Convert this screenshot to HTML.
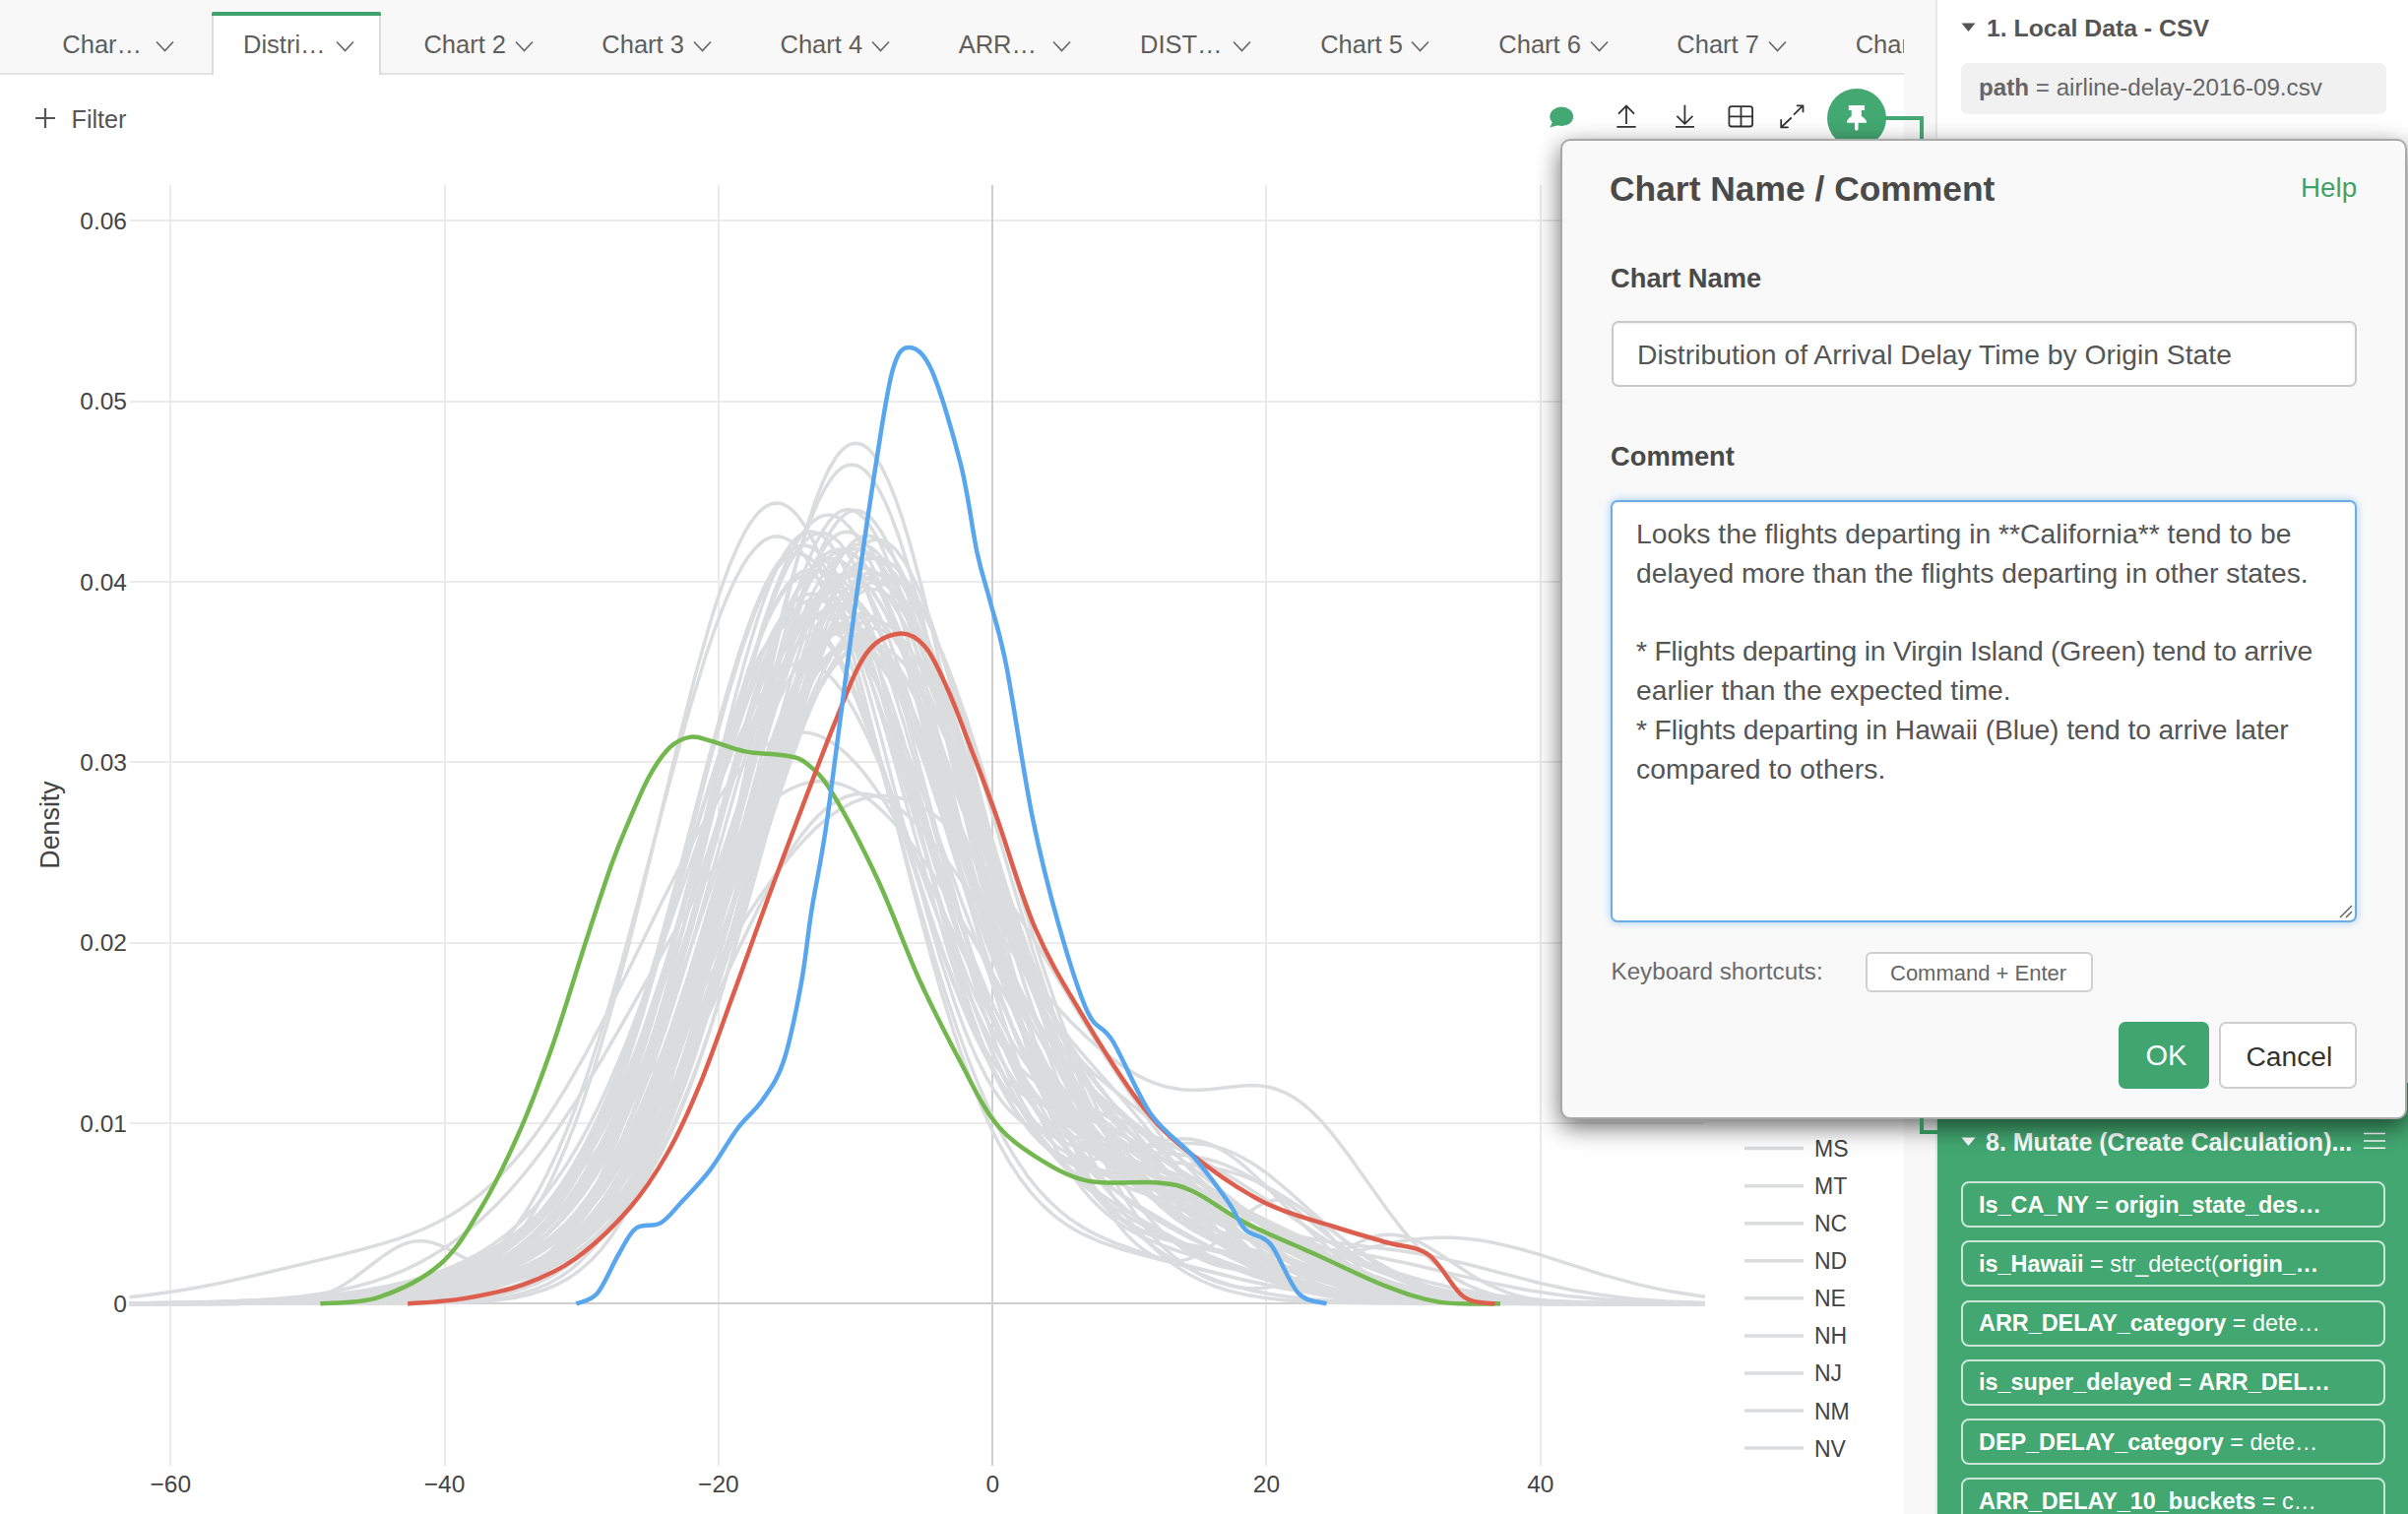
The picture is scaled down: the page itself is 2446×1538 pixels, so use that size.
<!DOCTYPE html>
<html>
<head>
<meta charset="utf-8">
<style>
html,body{margin:0;padding:0;}
body{width:2446px;height:1538px;overflow:hidden;position:relative;background:#fff;font-family:"Liberation Sans",sans-serif;color:#555;}
.abs{position:absolute;}
.t{position:absolute;white-space:nowrap;line-height:1;}
.chart{position:absolute;left:0;top:0;}
/* tab bar */
#tabbar{position:absolute;left:0;top:0;width:1934px;height:76px;background:#f8f8f8;border-bottom:0;}
#tabline{position:absolute;left:0;top:74px;width:1934px;height:2px;background:#e2e2e2;}
.tab{position:absolute;top:0;height:76px;}
.tabtxt{position:absolute;top:32.8px;font-size:25.5px;line-height:1;color:#5e5e5e;white-space:nowrap;}
.chev{position:absolute;top:41px;width:19px;height:12px;}
#activetab{position:absolute;left:215px;top:12px;width:172px;height:64px;background:#fff;border-left:2px solid #dcdcdc;border-right:2px solid #dcdcdc;box-sizing:border-box;}
#activetab:before{content:"";position:absolute;left:-2px;right:-2px;top:0;height:4px;background:#3ea36b;border-radius:2px 2px 0 0;}
#gapstrip{position:absolute;left:1934px;top:0;width:33px;height:1538px;background:#f8f8f8;}
#vline{position:absolute;left:1966px;top:0;width:2px;height:1538px;background:#e8e8e8;}
/* right panel */
#rpanel{position:absolute;left:1968px;top:0;width:478px;height:1538px;background:#fff;}
#green{position:absolute;left:1968px;top:1100px;width:478px;height:438px;background:#42a770;}
.pill{position:absolute;left:1992px;width:431px;height:47px;box-sizing:border-box;border:2px solid rgba(255,255,255,0.72);border-radius:8px;}
.pilltxt{position:absolute;left:2010px;font-size:23.4px;line-height:1;color:#fff;white-space:nowrap;}
.pilltxt b{font-weight:bold;}
/* popover */
#pop{position:absolute;left:1584.5px;top:140.7px;width:860.2px;height:996.3px;box-sizing:border-box;background:#f9f9f9;border:2px solid rgba(0,0,0,0.32);border-radius:10px;box-shadow:0 8px 25px rgba(0,0,0,0.58);}
.lbl{position:absolute;font-weight:bold;font-size:27.3px;line-height:1;color:#4a4a4a;white-space:nowrap;}
#inp{position:absolute;left:1636.5px;top:326px;width:757.5px;height:67px;box-sizing:border-box;background:#fff;border:2px solid #cacaca;border-radius:7px;box-shadow:inset 0 1px 2px rgba(0,0,0,0.08);}
#ta{position:absolute;left:1636px;top:508px;width:758px;height:428.5px;box-sizing:border-box;background:#fff;border:2px solid #6aaee8;border-radius:7px;box-shadow:0 0 8px rgba(102,175,233,0.6), inset 0 1px 2px rgba(0,0,0,0.08);}
.tatxt{position:absolute;left:1662px;font-size:28.3px;line-height:1;color:#555;white-space:nowrap;}
#btnok{position:absolute;left:2152px;top:1038px;width:92px;height:68px;box-sizing:border-box;background:#41a56f;border-radius:7px;}
#btncancel{position:absolute;left:2254px;top:1038px;width:140px;height:68px;box-sizing:border-box;background:#fff;border:2px solid #cfcfcf;border-radius:7px;}
#kbd{position:absolute;left:1894.5px;top:966.5px;width:231px;height:41px;box-sizing:border-box;background:#fff;border:2px solid #d0d0d0;border-radius:6px;}
</style>
</head>
<body>
<!-- tab bar -->
<div id="tabbar"></div>
<div id="tabline"></div>
<div id="activetab"></div>
<div class="tabtxt" style="left:63.3px;">Char…</div>
<div class="tabtxt" style="left:247.0px;">Distri…</div>
<div class="tabtxt" style="left:430.4px;">Chart 2</div>
<div class="tabtxt" style="left:611.3px;">Chart 3</div>
<div class="tabtxt" style="left:792.5px;">Chart 4</div>
<div class="tabtxt" style="left:973.7px;">ARR…</div>
<div class="tabtxt" style="left:1158.0px;">DIST…</div>
<div class="tabtxt" style="left:1341.2px;">Chart 5</div>
<div class="tabtxt" style="left:1522.3px;">Chart 6</div>
<div class="tabtxt" style="left:1703.3px;">Chart 7</div>
<div class="tabtxt" style="left:1884.7px;width:49.3px;overflow:hidden;">Chart 8</div>
<svg class="chev" style="left:157.5px" viewBox="0 0 19 12"><path d="M1 1.5L9.5 10.5L18 1.5" stroke="#666" stroke-width="1.6" fill="none"/></svg>
<svg class="chev" style="left:341.1px" viewBox="0 0 19 12"><path d="M1 1.5L9.5 10.5L18 1.5" stroke="#666" stroke-width="1.6" fill="none"/></svg>
<svg class="chev" style="left:522.8px" viewBox="0 0 19 12"><path d="M1 1.5L9.5 10.5L18 1.5" stroke="#666" stroke-width="1.6" fill="none"/></svg>
<svg class="chev" style="left:703.7px" viewBox="0 0 19 12"><path d="M1 1.5L9.5 10.5L18 1.5" stroke="#666" stroke-width="1.6" fill="none"/></svg>
<svg class="chev" style="left:884.9px" viewBox="0 0 19 12"><path d="M1 1.5L9.5 10.5L18 1.5" stroke="#666" stroke-width="1.6" fill="none"/></svg>
<svg class="chev" style="left:1068.5px" viewBox="0 0 19 12"><path d="M1 1.5L9.5 10.5L18 1.5" stroke="#666" stroke-width="1.6" fill="none"/></svg>
<svg class="chev" style="left:1252.2px" viewBox="0 0 19 12"><path d="M1 1.5L9.5 10.5L18 1.5" stroke="#666" stroke-width="1.6" fill="none"/></svg>
<svg class="chev" style="left:1433.1px" viewBox="0 0 19 12"><path d="M1 1.5L9.5 10.5L18 1.5" stroke="#666" stroke-width="1.6" fill="none"/></svg>
<svg class="chev" style="left:1614.5px" viewBox="0 0 19 12"><path d="M1 1.5L9.5 10.5L18 1.5" stroke="#666" stroke-width="1.6" fill="none"/></svg>
<svg class="chev" style="left:1795.8px" viewBox="0 0 19 12"><path d="M1 1.5L9.5 10.5L18 1.5" stroke="#666" stroke-width="1.6" fill="none"/></svg>
<div id="gapstrip"></div>
<div id="vline"></div>

<!-- filter -->
<svg class="abs" style="left:35px;top:109px" width="22" height="22" viewBox="0 0 22 22"><path d="M11 1V21M1 11H21" stroke="#555" stroke-width="2.2" fill="none"/></svg>
<div class="t" style="left:72.5px;top:108.5px;font-size:25.2px;color:#555;">Filter</div>

<svg class="chart" width="1940" height="1538" viewBox="0 0 1940 1538">
<g stroke="#ebebeb" stroke-width="2"><line x1="132" y1="1141" x2="1730" y2="1141"/><line x1="132" y1="958" x2="1730" y2="958"/><line x1="132" y1="774" x2="1730" y2="774"/><line x1="132" y1="591" x2="1730" y2="591"/><line x1="132" y1="408" x2="1730" y2="408"/><line x1="132" y1="224" x2="1730" y2="224"/><line x1="173" y1="188" x2="173" y2="1489"/><line x1="452" y1="188" x2="452" y2="1489"/><line x1="730" y1="188" x2="730" y2="1489"/><line x1="1286" y1="188" x2="1286" y2="1489"/><line x1="1565" y1="188" x2="1565" y2="1489"/></g>
<line x1="1008" y1="188" x2="1008" y2="1489" stroke="#cfcfcf" stroke-width="2"/>
<line x1="132" y1="1324" x2="1730" y2="1324" stroke="#cfcfcf" stroke-width="2"/>
<g fill="none" stroke="#dbdcde" stroke-width="3.5" stroke-linejoin="round">
<path d="M131.6,1324.3l119.3,-0.6l40.9,-0.9l33.8,-1.2l30.3,-1.7l28.5,-2.5l24.9,-3.0l23.1,-3.9l23.2,-5.1l19.5,-5.6l17.8,-6.5l17.8,-8.1l16.1,-9.3l14.2,-10.1l14.2,-12.3l12.5,-12.9l10.7,-13.0l8.9,-12.4l8.9,-13.9l8.9,-15.6l8.9,-17.4l8.9,-19.3l8.9,-21.3l8.9,-23.4l8.9,-25.5l8.9,-27.6l8.9,-29.6l10.7,-38.0l19.5,-75.7l33.9,-139.2l12.4,-49.8l12.5,-46.5l12.4,-41.7l7.2,-21.0l7.1,-18.7l7.1,-16.0l7.1,-13.2l7.1,-10.3l3.6,-3.9l3.6,-3.1l3.5,-2.4l3.6,-1.5l5.3,-0.7l5.4,1.1l3.5,1.8l3.6,2.6l5.3,5.4l7.1,9.9l5.4,9.4l7.1,15.1l7.1,17.7l7.1,20.2l12.5,40.2l12.5,45.2l42.7,169.7l17.8,67.1l8.9,31.0l8.9,29.0l8.9,26.7l7.1,19.6l7.1,18.1l7.1,16.4l7.2,14.9l8.9,16.5l7.1,11.5l8.9,12.4l8.9,10.5l8.9,8.6l7.1,5.8l8.9,6.0l8.9,4.8l8.9,3.8l8.9,3.2l8.9,2.5l33.8,8.2l16.0,4.4l16.1,5.6l16.0,6.8l14.2,7.1l16.0,9.2l16.1,10.0l48.0,31.2l14.3,8.6l14.2,7.9l17.8,8.8l16.0,6.7l16.0,5.6l17.8,5.0l21.4,4.4l21.4,3.1l24.9,2.3l28.5,1.5l30.2,0.8l39.2,0.4l183.3,0.2"/>
<path d="M131.6,1324.2l99.7,-1.1l37.4,-1.1l33.8,-1.6l30.2,-2.2l26.7,-2.7l25.0,-3.4l23.1,-4.1l21.4,-4.9l19.5,-5.7l17.8,-6.5l16.1,-7.2l16.0,-8.8l14.2,-9.5l14.3,-11.4l12.4,-11.8l12.5,-13.7l10.7,-13.6l10.6,-15.4l10.7,-17.3l10.7,-19.4l10.7,-21.6l8.9,-19.7l10.7,-25.7l8.9,-23.1l8.9,-24.6l17.8,-53.1l17.8,-57.2l35.6,-118.6l16.0,-50.5l14.2,-40.8l7.1,-18.5l7.2,-16.8l7.1,-15.1l7.1,-13.2l7.1,-11.1l5.4,-6.9l7.1,-7.3l5.3,-3.9l3.6,-1.8l3.5,-1.3l5.4,-0.7l5.3,0.6l5.4,1.9l5.3,3.3l7.1,6.5l5.4,6.3l7.1,10.2l5.3,9.1l7.1,13.8l12.5,28.2l14.2,37.6l16.1,47.1l33.8,105.4l16.0,48.2l16.0,44.5l16.0,39.7l8.9,19.6l8.9,17.9l8.9,16.1l10.7,17.0l8.9,12.3l10.7,12.6l8.9,8.9l10.7,8.9l7.1,5.0l8.9,5.3l8.9,4.4l10.7,4.3l17.8,5.6l37.4,9.5l17.8,5.1l17.8,6.2l17.8,7.5l17.8,8.8l17.8,9.8l17.8,10.7l53.4,33.4l16.0,9.3l16.0,8.6l17.8,8.6l17.8,7.4l17.8,6.4l17.8,5.2l23.1,5.3l23.2,3.8l26.7,3.0l28.5,1.9l32.0,1.3l39.2,0.6l145.9,0.4"/>
<path d="M131.6,1324.4l137.1,-0.5l44.5,-0.6l35.6,-1.1l33.8,-1.6l28.5,-2.2l26.7,-3.0l23.1,-3.5l23.1,-4.7l21.4,-5.7l19.6,-6.7l17.8,-7.8l16.0,-8.8l16.0,-10.9l14.3,-12.0l12.4,-12.6l10.7,-12.7l8.9,-12.1l10.7,-16.5l8.9,-15.6l8.9,-17.4l8.9,-19.4l8.9,-21.4l8.9,-23.6l8.9,-25.7l10.7,-33.7l8.9,-30.4l10.6,-39.0l19.6,-77.7l33.8,-143.1l14.3,-58.3l12.4,-47.4l12.5,-42.1l7.1,-21.2l7.1,-18.7l7.2,-15.9l5.3,-10.0l7.1,-10.7l3.6,-4.2l3.5,-3.3l3.6,-2.5l3.6,-1.7l5.3,-0.9l5.3,1.0l3.6,1.7l3.6,2.5l5.3,5.4l7.1,9.9l5.4,9.5l7.1,15.1l7.1,17.9l7.1,20.4l10.7,34.4l12.5,45.0l12.4,48.5l32.1,128.7l17.8,66.8l8.9,30.7l8.9,28.6l8.9,26.4l8.9,23.9l7.1,17.4l8.9,19.7l8.9,17.5l8.9,15.3l8.9,13.5l10.7,14.1l10.6,12.0l10.7,10.6l17.8,15.3l51.6,40.0l57.0,46.7l14.2,11.0l12.5,9.0l19.6,12.4l17.8,9.5l17.8,7.5l19.6,6.3l19.5,4.6l21.4,3.3l24.9,2.3l28.5,1.4l32.0,0.7l42.8,0.3l226.0,0.1"/>
<path d="M131.6,1324.4l131.7,-0.6l42.7,-0.7l37.4,-1.1l33.8,-1.6l30.3,-2.3l26.7,-2.8l24.9,-3.6l24.9,-4.8l21.4,-5.4l19.6,-6.3l17.8,-7.2l16.0,-8.1l16.0,-9.9l14.3,-10.7l14.2,-12.9l10.7,-11.4l10.7,-13.0l10.6,-14.9l8.9,-13.9l10.7,-18.8l8.9,-17.4l8.9,-19.1l8.9,-20.8l8.9,-22.6l10.7,-29.5l10.7,-31.9l10.7,-34.2l21.3,-74.1l33.8,-124.6l14.3,-51.0l14.2,-47.5l12.5,-37.1l8.9,-23.3l7.1,-16.4l7.1,-14.2l7.1,-11.9l7.2,-9.3l7.1,-6.8l3.5,-2.4l3.6,-1.7l3.6,-1.0l3.5,-0.4l5.4,0.8l3.5,1.3l3.6,2.0l5.3,4.2l7.1,7.9l5.4,7.4l7.1,12.1l7.1,14.1l7.1,16.1l10.7,27.4l12.5,35.7l12.4,38.6l35.6,114.0l10.7,32.4l10.7,30.6l12.5,33.0l10.6,25.8l12.5,27.1l12.5,24.1l12.4,21.5l14.3,22.0l16.0,22.3l19.6,25.4l56.9,71.5l23.2,28.0l12.4,14.3l10.7,11.4l10.7,10.7l10.7,9.8l14.2,11.5l12.5,8.6l12.4,7.4l14.3,6.9l14.2,5.4l16.0,4.7l16.0,3.3l19.6,2.9l17.8,1.7l19.6,1.2l53.4,1.5l81.9,0.5l183.3,0.1"/>
<path d="M131.6,1324.4l135.3,-0.5l42.7,-0.6l35.6,-1.1l33.8,-1.6l28.5,-2.2l26.7,-2.9l23.1,-3.4l23.2,-4.6l21.3,-5.6l19.6,-6.6l17.8,-7.6l16.0,-8.6l16.1,-10.6l14.2,-11.7l12.5,-12.2l10.6,-12.3l10.7,-14.2l10.7,-16.4l8.9,-15.4l8.9,-17.2l8.9,-19.1l8.9,-21.1l8.9,-23.0l8.9,-25.2l10.7,-32.9l8.9,-29.6l10.7,-37.9l19.5,-75.2l33.9,-137.8l12.4,-49.1l12.5,-45.9l12.4,-41.1l7.2,-20.7l7.1,-18.5l7.1,-15.9l7.1,-13.2l7.1,-10.2l3.6,-4.1l3.6,-3.2l3.5,-2.5l3.6,-1.6l5.3,-1.1l5.4,0.8l3.5,1.5l3.6,2.3l5.3,4.8l7.1,9.1l5.4,8.7l7.1,14.0l7.1,16.6l7.1,18.8l12.5,37.8l12.5,42.5l12.4,45.8l33.8,128.4l19.6,69.3l10.7,34.6l8.9,26.8l8.9,24.8l8.9,22.7l8.9,20.6l8.9,18.6l8.9,16.7l8.9,14.8l8.9,13.2l10.7,13.9l10.7,12.0l10.6,10.4l10.7,9.1l10.7,8.0l12.5,8.4l12.4,7.6l35.6,19.7l74.8,39.0l32.0,15.5l28.5,12.1l28.5,10.1l26.7,7.6l24.9,5.4l26.7,4.3l28.5,3.2l32.0,2.2l33.8,1.3l42.8,0.8l154.8,0.4"/>
<path d="M131.6,1324.3l117.5,-0.8l40.9,-0.8l35.6,-1.3l32.1,-1.8l30.2,-2.4l26.7,-3.0l23.2,-3.4l23.1,-4.5l21.4,-5.2l19.5,-6.2l17.8,-7.0l16.1,-7.8l16.0,-9.5l14.2,-10.2l14.3,-12.2l10.6,-10.7l10.7,-12.2l10.7,-13.8l8.9,-12.9l10.7,-17.2l8.9,-15.9l8.9,-17.3l8.9,-18.8l8.9,-20.4l10.7,-26.4l10.6,-28.4l10.7,-30.4l21.4,-65.4l35.6,-115.8l14.2,-44.9l14.3,-42.0l14.2,-37.3l8.9,-20.4l7.1,-14.3l7.1,-12.4l7.2,-10.5l7.1,-8.2l7.1,-6.1l3.6,-2.2l3.5,-1.5l3.6,-1.0l3.5,-0.4l5.4,0.5l3.5,1.1l3.6,1.6l5.3,3.6l7.2,6.8l5.3,6.5l7.1,10.6l7.1,12.5l7.2,14.5l12.4,29.3l14.3,38.6l16.0,48.1l32.0,101.6l14.3,43.8l16.0,45.9l14.2,36.7l8.9,20.7l8.9,18.7l8.9,16.7l7.1,11.9l7.2,10.6l8.9,11.5l8.9,9.5l8.9,7.7l8.9,5.9l8.9,4.4l8.9,3.0l8.9,1.8l8.9,0.8l10.6,-0.1l10.7,-0.9l30.3,-3.4l10.7,-0.5l8.9,0.1l10.6,1.0l10.7,2.0l10.7,3.2l8.9,3.6l8.9,4.5l8.9,5.1l8.9,5.9l10.7,7.9l19.6,16.3l35.6,31.9l16.0,13.9l16.0,12.8l14.2,10.2l16.1,10.1l17.8,9.2l16.0,6.6l17.8,5.8l17.8,4.2l19.6,3.2l21.3,2.3l23.2,1.5l26.7,0.9l32.0,0.5l131.7,0.3"/>
<path d="M131.6,1324.2l106.8,-1.0l37.4,-1.0l33.8,-1.6l30.3,-2.1l28.4,-2.9l25.0,-3.4l23.1,-4.3l21.4,-5.1l19.5,-6.0l17.8,-6.9l17.8,-8.5l16.1,-9.6l14.2,-10.3l14.2,-12.6l12.5,-13.0l12.5,-15.3l10.6,-15.1l10.7,-17.3l10.7,-19.5l10.7,-21.9l10.7,-24.5l8.9,-22.5l10.6,-29.3l16.1,-48.9l17.8,-60.4l17.8,-65.3l33.8,-128.9l16.0,-58.0l14.2,-46.7l7.2,-21.1l7.1,-19.2l7.1,-17.2l5.3,-11.4l7.2,-13.1l5.3,-8.2l7.1,-8.6l5.4,-4.6l3.5,-2.3l3.6,-1.5l5.3,-1.0l5.4,0.6l3.5,1.3l3.6,2.0l3.5,2.7l3.6,3.3l7.1,8.7l7.1,11.3l7.2,13.7l7.1,15.9l7.1,17.9l12.5,35.6l14.2,46.0l12.5,43.2l35.6,127.6l21.3,71.6l10.7,32.9l10.7,30.5l10.7,28.0l10.6,25.5l10.7,22.9l10.7,20.5l10.7,18.2l10.7,16.2l10.6,14.3l12.5,14.6l12.5,12.8l14.2,12.7l10.7,8.5l10.7,7.9l12.4,8.4l14.3,8.9l16.0,9.3l16.0,8.7l33.8,16.8l30.3,13.1l28.5,10.4l28.4,8.4l14.3,3.4l16.0,3.4l24.9,4.1l28.5,3.3l30.3,2.2l33.8,1.5l37.4,0.8l46.2,0.5l197.6,0.2"/>
<path d="M131.6,1324.3l122.8,-0.7l42.7,-0.8l37.4,-1.2l33.8,-1.8l30.3,-2.4l26.7,-2.9l24.9,-3.6l24.9,-4.8l21.4,-5.3l19.6,-6.3l17.8,-7.0l16.0,-7.9l16.0,-9.6l14.3,-10.3l14.2,-12.3l12.5,-12.7l12.4,-14.8l12.5,-17.1l10.7,-16.7l10.6,-18.7l10.7,-20.8l10.7,-23.1l10.7,-25.2l8.9,-22.7l8.9,-24.2l19.6,-57.9l17.8,-57.0l37.3,-124.2l16.1,-50.4l8.9,-26.0l7.1,-19.5l7.1,-18.0l7.1,-16.4l7.1,-14.7l7.2,-12.7l7.1,-10.7l5.3,-6.6l7.1,-6.8l5.4,-3.6l3.5,-1.7l3.6,-1.1l5.3,-0.5l5.4,0.8l3.5,1.3l3.6,1.9l5.3,3.8l7.2,7.2l5.3,6.7l7.1,10.8l7.1,12.8l7.2,14.5l12.4,29.0l12.5,32.8l12.4,35.3l37.4,109.8l10.7,29.5l10.7,27.8l12.4,29.7l10.7,22.9l10.7,20.3l12.5,20.7l7.1,10.5l8.9,11.7l8.9,10.4l8.9,9.2l8.9,8.4l10.7,9.3l44.5,35.8l19.5,17.7l12.5,12.3l12.5,13.1l40.9,45.3l16.0,17.1l16.0,15.8l16.1,14.0l12.4,9.6l12.5,8.4l12.4,7.1l14.3,6.7l14.2,5.4l14.3,4.1l16.0,3.5l17.8,2.7l16.0,1.6l17.8,1.3l48.1,1.5l71.2,0.5l163.7,0.2"/>
<path d="M131.6,1324.4l140.6,-0.5l44.5,-0.6l35.6,-1.0l33.8,-1.7l28.5,-2.1l26.7,-2.9l24.9,-3.7l25.0,-5.1l21.3,-5.7l19.6,-6.9l17.8,-7.8l16.0,-8.9l16.0,-11.0l14.3,-12.1l12.4,-12.7l10.7,-12.7l10.7,-14.7l10.7,-16.9l8.9,-15.9l8.9,-17.8l8.9,-19.7l8.9,-21.7l8.9,-23.8l8.9,-26.0l10.7,-34.0l8.9,-30.5l10.6,-39.1l17.8,-70.3l35.6,-149.3l12.5,-50.5l12.5,-47.2l12.4,-42.1l7.1,-21.2l7.2,-18.8l7.1,-16.2l7.1,-13.2l7.1,-10.2l5.4,-5.6l3.5,-2.7l3.6,-1.9l5.3,-1.2l5.4,0.6l3.5,1.5l3.6,2.3l3.5,3.1l3.6,4.0l7.1,10.2l5.4,9.7l7.1,15.5l7.1,18.3l7.1,20.7l12.5,41.4l12.4,46.6l12.5,50.2l33.8,140.9l17.8,69.7l8.9,32.2l8.9,30.2l8.9,27.8l8.9,25.5l7.1,18.6l8.9,21.0l7.2,15.1l8.9,16.7l7.1,11.7l8.9,12.8l8.9,10.8l8.9,9.0l7.1,6.1l8.9,6.4l8.9,5.2l8.9,4.2l8.9,3.5l10.7,3.5l49.8,13.5l23.2,8.1l14.2,6.1l16.0,7.6l58.8,31.4l26.7,13.0l14.2,5.9l14.2,5.2l14.3,4.5l16.0,4.1l19.6,3.8l21.3,3.0l23.2,2.0l26.7,1.4l65.8,1.2l162.0,0.1"/>
<path d="M131.6,1324.2l110.4,-1.0l40.9,-1.1l35.6,-1.4l33.8,-2.1l30.3,-2.6l26.7,-3.2l24.9,-3.9l23.1,-4.6l21.4,-5.5l19.6,-6.3l17.8,-7.1l17.8,-8.7l16.0,-9.6l14.2,-10.2l14.3,-12.1l12.4,-12.3l12.5,-14.2l12.5,-16.2l10.6,-15.7l12.5,-20.4l10.7,-19.5l10.7,-21.4l10.6,-23.2l17.8,-42.8l19.6,-52.2l19.6,-56.4l39.2,-117.2l17.8,-50.3l16.0,-41.0l7.1,-16.4l7.1,-15.1l7.1,-13.7l7.2,-12.1l7.1,-10.4l7.1,-8.7l7.1,-6.9l7.1,-4.9l7.2,-3.1l7.1,-1.1l7.1,0.9l7.1,2.8l7.1,4.7l7.2,6.5l7.1,8.3l8.9,12.7l7.1,11.8l8.9,16.8l14.2,30.7l14.3,34.3l14.2,36.9l39.2,104.3l12.4,31.7l10.7,25.9l12.5,28.4l10.7,22.7l10.6,21.1l12.5,22.5l10.7,17.6l12.4,18.6l12.5,16.7l12.5,15.0l12.4,13.6l14.3,14.0l16.0,14.3l16.0,13.1l26.7,19.9l30.3,20.6l30.2,18.8l26.7,15.1l24.9,12.3l25.0,10.5l24.9,8.7l24.9,6.8l24.9,5.2l24.9,3.7l28.5,3.0l30.3,1.9l33.8,1.2l40.9,0.7l144.2,0.5"/>
<path d="M131.6,1324.2l110.4,-1.0l40.9,-0.9l35.6,-1.4l32.0,-1.9l30.3,-2.6l26.7,-3.1l24.9,-3.8l23.2,-4.6l21.3,-5.4l19.6,-6.2l17.8,-7.1l16.0,-7.8l16.0,-9.4l14.3,-10.0l14.2,-12.0l12.5,-12.2l12.4,-14.1l12.5,-16.2l10.7,-15.7l12.4,-20.6l10.7,-19.7l10.7,-21.6l10.7,-23.6l17.8,-43.5l19.6,-53.2l17.8,-52.2l39.1,-119.2l16.0,-46.2l16.1,-41.9l7.1,-16.8l7.1,-15.4l7.1,-13.9l7.1,-12.2l7.2,-10.5l7.1,-8.6l7.1,-6.6l7.1,-4.6l7.1,-2.5l5.4,-0.5l5.3,0.7l7.1,2.8l7.2,4.9l7.1,6.8l5.3,6.5l7.1,10.2l7.2,12.0l7.1,13.7l7.1,15.2l7.1,16.5l14.3,36.6l16.0,45.0l32.0,94.8l16.0,45.9l16.1,42.7l14.2,34.3l8.9,19.4l8.9,17.6l8.9,15.9l7.1,11.5l8.9,12.6l8.9,11.0l8.9,9.2l8.9,7.7l8.9,6.2l8.9,4.9l8.9,3.7l8.9,2.8l8.9,1.9l8.9,1.4l37.4,3.2l17.8,2.5l10.7,2.4l8.9,2.7l8.9,3.2l8.9,3.9l8.9,4.5l8.9,5.1l17.8,11.8l17.8,13.4l48.0,38.2l16.1,11.6l14.2,9.4l16.0,9.3l16.0,7.8l16.1,6.5l16.0,5.1l17.8,4.4l19.6,3.4l23.1,2.6l24.9,1.7l26.7,0.9l35.6,0.6l133.5,0.3"/>
<path d="M131.6,1324.4l137.1,-0.5l44.5,-0.6l37.3,-1.0l33.9,-1.6l30.2,-2.1l28.5,-2.8l24.9,-3.4l24.9,-4.5l21.4,-5.2l19.6,-5.9l19.6,-7.7l16.0,-7.7l16.0,-9.6l14.2,-10.4l14.3,-12.5l10.7,-11.1l10.6,-12.6l10.7,-14.5l8.9,-13.5l10.7,-18.3l8.9,-16.9l8.9,-18.6l8.9,-20.3l8.9,-22.1l10.7,-28.7l10.7,-31.2l10.6,-33.4l21.4,-72.5l35.6,-128.6l14.2,-49.9l14.3,-46.2l12.4,-36.0l8.9,-22.6l7.2,-15.7l7.1,-13.7l7.1,-11.2l7.1,-8.8l7.1,-6.3l3.6,-2.1l3.6,-1.5l5.3,-1.0l5.3,0.5l3.6,1.2l3.6,1.8l5.3,3.9l7.1,7.5l7.1,9.9l7.2,12.2l7.1,14.2l7.1,16.2l12.5,32.4l12.4,36.3l12.5,39.1l33.8,109.7l19.6,59.4l10.7,29.7l8.9,23.0l8.9,21.3l8.9,19.5l8.9,17.8l8.9,16.1l8.9,14.4l8.9,13.0l8.9,11.6l10.6,12.4l10.7,11.0l12.5,11.4l19.6,16.1l56.9,43.4l60.5,48.6l14.3,10.9l14.2,10.2l19.6,12.7l19.6,11.0l19.6,9.1l19.5,7.2l21.4,5.9l23.1,4.6l25.0,3.2l30.2,2.3l30.3,1.2l40.9,0.6l169.1,0.3"/>
<path d="M131.6,1324.2l110.4,-0.9l40.9,-1.0l35.6,-1.4l32.0,-1.9l30.3,-2.5l26.7,-3.1l24.9,-3.9l23.2,-4.7l21.3,-5.5l19.6,-6.3l17.8,-7.2l16.0,-8.0l16.0,-9.6l14.3,-10.4l14.2,-12.3l12.5,-12.6l12.4,-14.6l12.5,-16.8l10.7,-16.3l10.7,-18.2l10.6,-20.1l10.7,-22.2l10.7,-24.3l17.8,-44.8l19.6,-55.2l17.8,-54.3l39.1,-124.3l17.8,-53.3l14.3,-38.8l7.1,-17.5l7.1,-16.1l7.1,-14.5l7.2,-12.7l7.1,-10.9l7.1,-9.0l7.1,-6.8l7.1,-4.8l3.6,-1.5l3.6,-1.0l5.3,-0.5l5.3,0.8l3.6,1.1l3.6,1.8l7.1,5.0l7.1,7.1l5.3,6.7l7.2,10.5l7.1,12.3l7.1,13.9l12.5,27.8l14.2,36.0l12.5,34.0l37.3,105.4l12.5,33.1l10.7,26.7l12.4,28.6l12.5,25.8l10.7,19.6l12.4,20.3l8.9,12.7l8.9,11.6l10.7,12.4l10.7,11.2l16.0,15.1l35.6,31.3l19.6,18.1l21.4,21.1l39.1,41.0l16.0,16.2l16.1,15.1l16.0,13.7l14.2,10.6l12.5,8.1l14.2,7.9l14.3,6.4l14.2,5.2l16.0,4.5l16.0,3.3l17.8,2.6l17.8,1.8l19.6,1.3l49.9,1.5l78.3,0.6l165.5,0.1"/>
<path d="M131.6,1324.3l119.3,-0.8l42.7,-0.8l35.6,-1.3l33.8,-1.7l30.3,-2.4l26.7,-2.8l24.9,-3.5l24.9,-4.6l21.4,-5.1l19.5,-5.9l17.8,-6.7l17.8,-8.3l16.1,-9.1l14.2,-9.8l14.2,-11.6l12.5,-11.9l12.5,-13.8l12.4,-15.9l10.7,-15.5l12.5,-20.3l10.6,-19.5l10.7,-21.5l10.7,-23.4l17.8,-43.4l19.6,-53.4l17.8,-52.5l39.1,-120.2l17.8,-51.8l16.1,-41.8l7.1,-16.7l7.1,-15.3l7.1,-13.7l7.1,-12.0l7.2,-10.2l5.3,-6.4l7.1,-6.7l7.1,-4.8l7.2,-2.6l5.3,-0.6l5.3,0.5l7.2,2.6l5.3,3.3l7.1,6.2l5.4,5.8l7.1,9.5l5.3,8.2l7.1,12.4l12.5,25.3l14.2,33.4l16.1,41.6l35.6,98.1l16.0,42.5l16.0,39.4l16.0,35.4l10.7,21.1l8.9,15.9l8.9,14.5l10.7,15.5l8.9,11.4l10.7,12.1l10.6,10.5l10.7,9.1l14.3,10.3l16.0,9.9l14.2,7.7l44.5,22.9l30.3,17.4l26.7,17.1l58.7,39.7l28.5,17.6l17.8,9.7l16.0,7.8l16.0,6.7l17.8,6.4l23.2,6.5l23.1,4.8l24.9,3.7l28.5,2.6l30.3,1.6l37.4,1.0l128.1,0.7"/>
<path d="M131.6,1324.2l106.8,-1.0l39.2,-1.0l35.6,-1.5l30.2,-2.0l28.5,-2.6l26.7,-3.3l23.1,-3.9l23.2,-5.0l19.6,-5.4l17.8,-6.1l17.8,-7.6l16.0,-8.4l16.0,-10.3l14.2,-11.0l12.5,-11.4l12.5,-13.4l10.6,-13.1l10.7,-14.8l10.7,-16.8l10.7,-18.7l10.7,-20.8l10.6,-23.1l10.7,-25.2l8.9,-22.7l8.9,-24.1l19.6,-57.7l17.8,-56.8l37.4,-123.6l16.0,-49.9l14.2,-40.4l7.2,-18.1l7.1,-16.7l7.1,-14.9l7.1,-13.0l7.1,-11.1l5.4,-6.8l7.1,-7.2l5.3,-3.9l3.6,-1.9l3.6,-1.3l5.3,-0.8l5.3,0.5l5.4,1.9l5.3,3.1l7.1,6.2l5.4,6.2l7.1,10.0l5.3,8.8l7.2,13.4l12.4,27.6l14.3,36.8l16.0,46.1l32.0,97.7l16.0,47.1l16.1,43.4l14.2,34.4l8.9,19.3l8.9,17.5l8.9,15.7l8.9,13.9l8.9,12.2l10.7,12.5l8.9,8.9l10.7,9.1l8.9,6.4l10.6,6.6l12.5,6.8l28.5,14.1l14.2,7.5l14.3,8.4l14.2,9.5l14.2,10.6l14.3,11.6l48.0,42.3l16.1,13.6l16.0,12.6l14.2,10.0l16.0,9.9l14.3,7.5l14.2,6.3l16.0,5.7l19.6,5.3l23.2,4.3l24.9,2.8l28.5,1.8l30.2,0.9l42.7,0.5l197.6,0.2"/>
<path d="M131.6,1324.3l106.8,-1.0l39.2,-1.0l33.8,-1.5l30.2,-2.1l28.5,-2.8l24.9,-3.5l23.2,-4.2l21.3,-5.1l19.6,-5.9l17.8,-6.8l17.8,-8.4l16.0,-9.5l14.3,-10.3l14.2,-12.4l12.5,-13.0l12.4,-15.2l10.7,-15.0l10.7,-17.2l10.7,-19.5l10.7,-21.9l10.6,-24.4l8.9,-22.4l10.7,-29.4l16.0,-48.9l17.8,-60.5l17.8,-65.5l35.6,-136.1l16.1,-57.8l14.2,-46.3l12.5,-35.0l7.1,-17.2l5.3,-11.5l7.1,-13.1l5.4,-8.2l7.1,-8.5l5.3,-4.6l3.6,-2.2l3.6,-1.5l5.3,-0.9l5.3,0.7l3.6,1.3l3.6,2.1l3.5,2.7l3.6,3.5l7.1,8.9l7.1,11.5l7.1,13.9l7.2,16.1l7.1,18.2l12.4,36.1l12.5,40.3l14.2,49.7l35.6,128.1l19.6,65.8l10.7,33.1l10.7,30.6l10.7,28.1l8.9,21.4l8.9,19.5l10.6,21.2l10.7,18.8l10.7,16.6l10.7,14.7l12.4,14.9l12.5,12.9l14.2,12.8l10.7,8.6l12.5,9.1l12.4,8.4l14.3,8.9l35.6,20.4l19.6,10.3l17.8,8.9l30.2,13.6l28.5,10.8l26.7,8.3l28.5,6.7l24.9,4.4l26.7,3.2l28.5,2.3l33.8,1.6l35.6,0.8l46.3,0.4l201.1,0.2"/>
<path d="M131.6,1324.4l128.2,-0.6l42.7,-0.7l35.6,-1.2l33.8,-1.7l28.5,-2.2l26.7,-3.0l23.1,-3.4l23.2,-4.5l21.3,-5.4l19.6,-6.4l17.8,-7.3l16.0,-8.1l16.0,-10.1l14.3,-10.9l14.2,-13.2l10.7,-11.6l8.9,-11.0l10.7,-15.0l8.9,-14.0l10.7,-18.9l8.9,-17.5l8.9,-19.3l8.9,-21.0l8.9,-22.9l10.6,-29.8l8.9,-26.7l10.7,-34.2l19.6,-67.7l37.4,-137.9l12.4,-44.6l14.3,-47.5l12.4,-37.0l8.9,-23.1l7.2,-16.2l7.1,-13.9l7.1,-11.5l7.1,-9.0l3.6,-3.5l3.5,-2.8l3.6,-2.2l3.6,-1.4l5.3,-0.9l5.3,0.7l3.6,1.3l3.6,2.0l3.5,2.7l3.6,3.3l7.1,8.6l7.1,11.2l7.1,13.4l7.2,15.7l7.1,17.6l12.4,34.8l12.5,39.0l12.5,41.6l33.8,116.5l17.8,57.5l10.7,31.9l8.9,24.8l8.9,22.9l8.9,21.1l7.1,15.5l8.9,17.7l8.9,15.8l8.9,14.1l8.9,12.4l8.9,10.9l8.9,9.6l10.7,9.9l8.9,7.1l8.9,6.2l8.9,5.6l10.6,5.9l17.8,8.6l46.3,20.3l24.9,11.7l25.0,12.6l55.1,29.3l21.4,10.7l21.4,9.8l19.5,8.0l19.6,6.9l19.6,5.8l24.9,5.9l24.9,4.4l26.7,3.2l30.3,2.4l32.0,1.5l39.2,0.9l131.7,0.5"/>
<path d="M131.6,1324.4l133.5,-0.6l42.7,-0.7l37.4,-1.1l33.8,-1.6l30.3,-2.2l28.5,-3.0l24.9,-3.6l24.9,-4.7l21.4,-5.3l19.5,-6.2l19.6,-7.9l16.0,-8.0l16.1,-9.9l14.2,-10.6l14.2,-12.9l10.7,-11.2l10.7,-12.9l10.7,-14.7l8.9,-13.7l10.7,-18.5l8.9,-17.1l8.9,-18.7l8.9,-20.4l8.9,-22.2l10.6,-28.8l10.7,-31.1l10.7,-33.4l21.4,-72.4l35.6,-128.5l14.2,-49.9l14.2,-46.6l14.3,-41.3l8.9,-22.4l7.1,-15.7l7.1,-13.6l7.1,-11.3l7.2,-8.9l7.1,-6.3l3.5,-2.3l3.6,-1.5l3.6,-0.9l3.5,-0.3l5.4,0.9l3.5,1.4l3.6,2.1l7.1,6.0l7.1,8.5l7.1,10.9l7.2,13.1l7.1,15.1l7.1,17.1l12.5,33.8l14.2,43.5l14.2,46.9l33.9,114.8l21.3,67.9l10.7,31.1l8.9,24.3l10.7,26.9l8.9,20.5l8.9,18.9l8.9,17.1l8.9,15.5l10.7,16.6l8.9,12.3l10.6,13.1l10.7,11.4l10.7,10.0l8.9,7.4l10.7,8.0l10.7,7.2l12.4,7.5l26.7,14.4l41.0,19.7l49.8,22.6l37.4,15.5l17.8,6.6l16.0,5.4l17.8,5.3l16.0,4.3l24.9,5.5l26.7,4.5l28.5,3.5l32.1,2.5l33.8,1.6l39.1,1.0l126.4,0.7"/>
<path d="M131.6,1324.3l113.9,-0.8l41.0,-0.9l35.6,-1.3l32.0,-1.9l30.3,-2.5l26.7,-3.2l23.1,-3.6l23.1,-4.7l21.4,-5.7l19.6,-6.6l17.8,-7.5l16.0,-8.3l16.0,-10.2l14.3,-11.1l12.4,-11.4l12.5,-13.3l10.7,-13.2l12.4,-17.6l10.7,-17.2l10.7,-19.3l10.7,-21.5l10.6,-23.8l10.7,-26.1l8.9,-23.4l8.9,-24.9l17.8,-54.0l17.8,-58.2l37.4,-127.0l16.0,-51.3l14.3,-41.4l7.1,-18.6l7.1,-17.1l7.1,-15.2l7.1,-13.3l7.2,-11.3l5.3,-6.9l7.1,-7.3l5.4,-3.9l3.5,-1.9l3.6,-1.2l5.3,-0.8l5.4,0.7l3.5,1.1l3.6,1.8l7.1,5.3l7.1,7.5l7.1,9.8l7.2,11.8l7.1,13.7l7.1,15.4l12.5,30.6l12.4,34.2l14.3,42.0l33.8,103.1l19.6,55.9l10.6,28.0l8.9,21.7l10.7,24.0l8.9,18.3l8.9,16.6l8.9,15.1l8.9,13.6l10.7,14.5l8.9,10.7l10.7,11.5l10.7,10.1l12.4,10.6l21.4,16.0l60.5,42.0l67.6,50.0l26.7,18.1l21.4,12.8l19.6,10.1l19.6,8.4l21.3,7.2l23.2,5.9l23.1,4.2l26.7,3.1l30.3,2.1l32.0,1.1l42.7,0.6l178.0,0.3"/>
<path d="M131.6,1324.3l117.5,-0.8l42.7,-0.9l37.4,-1.3l33.8,-1.9l30.3,-2.4l28.4,-3.1l25.0,-3.7l24.9,-4.8l21.3,-5.2l19.6,-6.1l19.6,-7.6l17.8,-8.6l16.0,-9.4l14.3,-10.1l14.2,-12.0l12.5,-12.3l12.4,-14.2l12.5,-16.3l12.4,-18.6l12.5,-21.0l10.7,-20.2l10.7,-22.1l10.6,-24.2l8.9,-21.6l10.7,-27.7l19.6,-55.1l17.8,-54.0l37.4,-117.5l17.8,-53.1l16.0,-43.3l7.1,-17.3l7.1,-15.9l7.2,-14.3l7.1,-12.7l7.1,-10.9l7.1,-8.9l7.1,-6.9l7.2,-4.9l7.1,-2.7l5.3,-0.7l3.6,0.3l3.5,0.7l7.2,3.2l7.1,5.2l7.1,7.3l7.1,9.3l7.1,11.1l7.2,12.8l8.9,18.2l14.2,33.7l14.2,37.8l14.3,40.7l35.6,104.7l19.6,54.0l10.6,27.2l8.9,21.2l10.7,23.6l8.9,18.1l8.9,16.5l8.9,15.1l8.9,13.6l8.9,12.4l8.9,11.1l10.7,11.8l10.7,10.6l12.4,10.9l14.3,11.0l16.0,11.4l49.8,33.2l57.0,39.0l24.9,16.0l21.4,12.2l19.6,9.7l19.5,8.0l19.6,6.4l21.4,5.3l23.1,4.1l24.9,2.9l28.5,1.9l32.1,1.2l40.9,0.6l158.4,0.4"/>
<path d="M131.6,1324.0l97.9,-1.4l37.4,-1.2l33.8,-1.8l30.3,-2.2l28.4,-2.9l26.7,-3.6l23.2,-4.1l23.1,-5.3l19.6,-5.6l17.8,-6.3l17.8,-7.8l16.0,-8.5l14.3,-9.1l14.2,-10.7l14.2,-12.7l12.5,-12.9l10.7,-12.6l12.4,-16.7l10.7,-16.0l12.5,-21.0l10.7,-20.0l10.6,-21.9l10.7,-23.8l17.8,-43.7l19.6,-53.3l17.8,-52.2l39.2,-118.8l17.8,-51.2l16.0,-41.6l7.1,-16.8l7.1,-15.4l7.1,-13.9l7.2,-12.4l7.1,-10.7l7.1,-8.9l7.1,-7.0l7.1,-5.1l7.2,-3.1l7.1,-1.1l7.1,0.9l7.1,2.8l7.1,4.8l8.9,8.7l7.2,8.9l8.9,13.5l7.1,12.6l8.9,17.7l14.2,32.3l14.3,36.0l14.2,38.5l37.4,104.2l23.1,60.6l12.5,30.0l10.7,24.0l12.4,25.8l10.7,20.3l10.7,18.5l10.7,16.9l10.6,15.2l12.5,16.0l12.5,14.2l12.4,12.7l14.3,12.9l14.2,11.5l23.1,16.5l28.5,17.6l33.8,18.6l33.9,16.6l30.2,13.1l28.5,10.5l28.5,8.8l28.5,6.8l26.7,5.0l26.7,3.6l30.2,2.8l33.8,2.0l35.6,1.1l44.5,0.7l153.1,0.5"/>
<path d="M131.6,1324.3l129.9,-0.7l42.8,-0.7l37.3,-1.2l33.9,-1.7l30.2,-2.2l28.5,-3.1l24.9,-3.6l24.9,-4.7l21.4,-5.3l19.6,-6.2l17.8,-6.9l17.8,-8.7l16.0,-9.7l14.2,-10.5l14.3,-12.4l10.7,-11.0l10.6,-12.4l10.7,-14.2l10.7,-16.0l10.7,-18.0l8.9,-16.7l8.9,-18.2l8.9,-19.8l8.9,-21.4l10.7,-27.8l10.6,-30.0l10.7,-32.1l21.4,-69.3l37.4,-129.2l14.2,-47.8l14.2,-44.4l12.5,-34.9l8.9,-22.0l7.1,-15.5l8.9,-16.7l7.1,-10.9l7.2,-8.6l7.1,-6.2l3.5,-2.2l3.6,-1.6l3.6,-0.9l3.5,-0.4l5.4,0.7l3.5,1.3l3.6,1.8l5.3,3.9l7.1,7.4l5.4,7.0l7.1,11.3l5.3,9.9l7.2,14.9l12.4,30.3l14.3,40.1l16.0,50.0l35.6,117.9l16.0,51.0l17.8,52.2l16.0,41.7l10.7,24.7l8.9,18.6l8.9,16.8l10.7,17.8l8.9,13.1l10.7,13.6l10.6,11.7l10.7,9.9l7.1,5.7l8.9,6.4l8.9,5.6l10.7,5.9l17.8,8.6l46.3,20.4l21.4,10.3l24.9,13.1l49.8,27.6l21.4,11.0l17.8,8.4l17.8,7.4l17.8,6.4l17.8,5.3l21.3,5.0l23.2,3.9l24.9,2.9l28.5,2.1l30.2,1.2l37.4,0.7l133.5,0.4"/>
<path d="M131.6,1324.3l115.7,-0.8l39.2,-0.8l33.8,-1.3l30.2,-1.9l28.5,-2.5l24.9,-3.1l23.2,-3.9l21.3,-4.7l19.6,-5.5l17.8,-6.3l17.8,-8.0l16.0,-8.9l14.3,-9.7l14.2,-11.8l12.5,-12.4l10.7,-12.4l10.6,-14.2l10.7,-16.3l10.7,-18.6l10.7,-21.0l10.7,-23.6l8.9,-21.8l10.6,-28.5l16.1,-47.9l17.8,-59.6l17.8,-64.8l33.8,-128.1l16.0,-57.4l14.2,-45.9l12.5,-34.6l7.1,-16.9l5.4,-11.1l7.1,-12.7l5.3,-7.7l7.1,-8.0l5.4,-4.0l5.3,-2.5l5.4,-0.8l5.3,0.8l3.6,1.5l3.5,2.2l5.4,4.7l7.1,8.6l7.1,11.3l7.1,13.8l7.1,16.2l7.2,18.3l12.4,36.3l12.5,40.8l12.4,43.8l32.1,116.0l19.6,66.6l8.9,27.9l8.9,26.1l8.9,24.2l8.9,22.1l7.1,16.2l8.9,18.3l7.1,13.1l8.9,14.7l8.9,12.7l8.9,10.9l8.9,9.3l8.9,7.9l8.9,6.5l10.7,6.2l10.7,4.9l12.4,4.4l10.7,2.8l10.7,2.2l44.5,7.2l21.3,4.1l21.4,5.5l21.4,6.9l17.8,6.8l19.5,8.5l73.0,35.2l33.8,15.0l17.8,7.0l17.8,6.1l17.8,5.4l17.8,4.5l23.2,4.8l23.1,3.6l26.7,3.0l28.5,2.1l30.3,1.4l35.6,0.9l110.3,0.7"/>
<path d="M131.6,1324.1l99.7,-1.2l37.4,-1.2l32.0,-1.5l30.3,-2.2l26.7,-2.7l24.9,-3.4l23.1,-4.1l21.4,-4.8l19.6,-5.7l17.8,-6.4l17.8,-8.0l16.0,-8.8l14.2,-9.5l14.3,-11.4l12.4,-11.8l12.5,-13.7l10.7,-13.5l10.6,-15.3l10.7,-17.2l10.7,-19.2l10.7,-21.4l8.9,-19.5l10.7,-25.4l8.9,-22.8l8.9,-24.3l17.8,-52.4l17.8,-56.6l37.3,-123.4l16.1,-50.1l14.2,-40.4l7.1,-18.2l7.1,-16.7l7.2,-15.0l7.1,-13.1l7.1,-11.1l5.3,-6.9l7.2,-7.2l5.3,-3.9l3.6,-1.9l3.5,-1.2l5.4,-0.8l5.3,0.5l3.6,1.1l3.5,1.8l5.4,3.6l7.1,7.0l5.3,6.7l7.1,10.7l5.4,9.5l7.1,14.2l12.5,29.1l14.2,38.5l14.2,42.6l32.1,101.4l14.2,43.5l14.3,40.6l12.4,32.0l8.9,20.5l7.1,14.9l7.2,13.5l7.1,12.0l7.1,10.6l8.9,11.3l7.1,7.5l8.9,7.5l5.4,3.7l5.3,3.1l5.3,2.5l7.2,2.6l7.1,1.9l7.1,1.3l32.0,3.4l14.3,2.7l8.9,2.6l7.1,2.8l8.9,4.5l7.1,4.4l7.1,5.0l8.9,7.3l7.2,6.6l8.9,9.0l16.0,17.8l32.0,38.5l12.5,14.4l14.2,15.3l14.3,13.5l16.0,13.0l7.1,5.0l8.9,5.5l16.0,8.1l8.9,3.6l8.9,3.0l17.8,4.6l19.6,3.2l23.1,2.2l26.7,1.3l74.8,1.0l229.6,0.2"/>
<path d="M131.6,1324.4l144.2,-0.5l44.5,-0.6l37.4,-1.0l33.8,-1.6l30.2,-2.1l26.7,-2.7l25.0,-3.5l24.9,-4.7l21.3,-5.3l21.4,-6.8l17.8,-7.2l16.0,-8.1l16.0,-10.0l14.3,-10.8l14.2,-13.1l10.7,-11.6l10.7,-13.3l10.7,-15.3l8.9,-14.3l10.6,-19.4l8.9,-18.0l8.9,-19.8l8.9,-21.7l8.9,-23.6l10.7,-30.9l10.7,-33.5l10.7,-36.0l21.3,-78.1l35.6,-138.9l12.5,-47.1l14.2,-50.1l12.5,-39.1l8.9,-24.3l7.1,-17.0l7.1,-14.6l7.2,-12.0l7.1,-9.3l3.5,-3.5l3.6,-2.9l3.6,-2.1l3.5,-1.3l5.4,-0.6l5.3,1.0l3.6,1.7l3.5,2.3l3.6,3.2l3.5,3.8l7.2,9.8l7.1,12.5l7.1,15.0l7.1,17.5l7.1,19.6l12.5,38.8l12.5,43.3l12.4,46.4l35.6,137.1l17.8,64.5l10.7,35.9l8.9,27.8l8.9,26.0l8.9,23.8l7.1,17.6l8.9,20.1l8.9,18.0l8.9,16.0l8.9,14.1l8.9,12.4l8.9,10.6l10.7,10.9l12.5,10.3l12.4,8.2l14.3,7.3l16.0,6.1l21.3,6.1l55.2,12.5l30.3,8.0l32.0,10.0l57.0,19.6l24.9,8.1l26.7,7.8l26.7,6.4l23.1,4.6l23.2,3.5l24.9,2.8l26.7,2.1l28.5,1.4l33.8,1.0l96.1,0.8"/>
<path d="M131.6,1324.1l103.2,-1.2l39.2,-1.2l35.6,-1.6l32.0,-2.3l28.5,-2.7l26.7,-3.5l23.2,-3.9l23.1,-5.0l19.6,-5.4l17.8,-6.0l17.8,-7.3l16.0,-8.1l16.0,-9.8l14.3,-10.5l14.2,-12.3l12.5,-12.6l10.6,-12.2l12.5,-16.3l10.7,-15.7l12.4,-20.5l10.7,-19.6l10.7,-21.5l10.7,-23.3l8.9,-20.9l10.7,-26.7l19.5,-53.1l17.8,-51.9l39.2,-118.5l17.8,-51.0l16.0,-41.6l7.1,-16.8l7.2,-15.4l8.9,-17.3l7.1,-12.1l7.1,-10.3l7.1,-8.6l7.1,-6.8l7.2,-4.9l7.1,-2.9l7.1,-1.0l7.1,0.9l7.1,2.9l7.2,4.7l7.1,6.5l7.1,8.2l8.9,12.5l7.1,11.7l8.9,16.5l14.3,30.1l14.2,33.7l14.2,36.0l42.8,111.2l12.4,31.0l12.5,29.5l14.2,31.7l14.3,29.3l14.2,27.0l14.2,24.7l14.3,22.5l16.0,23.2l16.0,21.0l17.8,21.4l17.8,19.4l19.6,19.5l17.8,16.2l19.6,16.0l19.6,14.2l17.8,11.4l17.8,9.8l19.5,9.2l19.6,7.5l19.6,6.0l21.4,5.0l21.3,3.8l21.4,2.6l23.1,2.1l26.7,1.5l32.1,1.0l80.1,0.9l172.6,0.3"/>
<path d="M131.6,1324.2l108.6,-1.1l40.9,-1.1l35.6,-1.5l32.1,-2.0l30.2,-2.7l26.7,-3.3l24.9,-3.9l23.2,-4.8l21.3,-5.5l19.6,-6.5l17.8,-7.2l16.0,-7.9l16.1,-9.6l14.2,-10.1l14.2,-12.1l12.5,-12.2l12.5,-14.1l12.4,-16.2l10.7,-15.6l12.5,-20.3l10.6,-19.4l10.7,-21.3l10.7,-23.1l17.8,-42.5l19.6,-51.9l17.8,-50.9l40.9,-121.7l17.8,-50.0l16.0,-40.6l7.2,-16.3l7.1,-14.9l7.1,-13.5l7.1,-11.9l7.1,-10.2l7.2,-8.4l7.1,-6.6l7.1,-4.6l7.1,-2.7l5.4,-0.8l5.3,0.4l7.1,2.3l7.1,4.1l7.2,6.1l7.1,7.8l7.1,9.5l7.1,11.1l7.1,12.6l12.5,25.0l14.2,32.4l12.5,30.5l35.6,90.0l10.7,25.7l10.7,24.3l12.4,26.3l10.7,20.7l10.7,18.8l12.4,19.8l12.5,17.7l12.5,16.0l16.0,18.9l35.6,40.1l17.8,21.0l19.6,24.4l37.3,48.2l17.8,21.8l12.5,14.2l12.5,13.0l12.4,11.6l10.7,8.8l12.5,8.9l12.4,7.5l12.5,6.3l12.4,5.0l14.3,4.6l14.2,3.4l16.0,2.9l17.8,2.2l19.6,1.7l21.4,1.2l56.9,1.5l85.5,0.7l156.6,0.2"/>
<path d="M131.6,1323.9l90.8,-1.6l35.6,-1.3l32.0,-1.8l30.3,-2.4l26.7,-2.9l24.9,-3.5l23.1,-4.3l21.4,-4.9l19.6,-5.7l17.8,-6.4l16.0,-7.0l16.0,-8.4l14.3,-9.0l14.2,-10.6l14.2,-12.6l12.5,-12.7l10.7,-12.4l12.4,-16.4l10.7,-15.8l10.7,-17.5l10.7,-19.3l10.7,-21.0l10.6,-22.9l17.8,-41.9l19.6,-51.1l17.8,-49.8l37.4,-108.2l17.8,-48.8l16.0,-39.9l7.1,-16.1l7.2,-14.8l7.1,-13.4l7.1,-11.9l7.1,-10.3l7.1,-8.5l7.2,-6.8l7.1,-5.0l7.1,-3.0l7.1,-1.1l5.4,0.4l7.1,2.3l7.1,4.1l7.1,6.0l5.4,5.7l7.1,9.0l7.1,10.7l7.1,12.2l7.1,13.6l7.2,14.8l14.2,32.8l16.0,40.6l37.4,100.5l16.0,41.6l17.8,42.8l8.9,19.8l8.9,18.4l10.7,20.4l8.9,15.4l8.9,14.1l10.7,15.1l10.7,13.1l10.6,11.4l10.7,9.8l10.7,8.3l8.9,6.0l8.9,5.2l8.9,4.5l10.7,4.9l17.8,6.8l55.2,19.2l17.8,7.1l17.8,7.9l30.2,15.1l67.7,36.5l16.0,8.0l16.0,7.5l16.0,6.7l16.0,6.0l16.1,5.3l16.0,4.5l23.1,5.2l24.9,4.2l26.7,3.1l30.3,2.2l32.0,1.4l39.2,0.8l131.7,0.5"/>
<path d="M131.6,1324.4l138.8,-0.5l44.5,-0.7l35.6,-1.0l33.9,-1.6l28.4,-2.1l26.7,-2.8l25.0,-3.5l24.9,-4.9l21.3,-5.4l19.6,-6.5l17.8,-7.4l16.0,-8.3l16.1,-10.2l14.2,-11.2l14.2,-13.6l10.7,-12.0l10.7,-13.8l10.7,-15.9l8.9,-14.9l8.9,-16.6l8.9,-18.4l8.9,-20.2l8.9,-22.2l8.9,-24.1l10.7,-31.5l8.9,-28.4l10.6,-36.3l19.6,-72.1l35.6,-140.0l12.5,-47.6l14.2,-50.8l12.5,-39.5l7.1,-19.9l7.1,-17.8l7.1,-15.3l7.2,-12.7l7.1,-9.9l3.5,-3.9l3.6,-3.1l3.6,-2.4l3.5,-1.6l5.4,-1.0l5.3,0.7l5.3,2.5l5.4,4.1l7.1,8.2l5.3,8.0l5.4,9.5l5.3,11.0l7.1,16.9l5.4,14.1l7.1,20.7l14.2,46.6l14.3,51.6l32.0,123.1l16.0,59.3l16.1,54.4l14.2,43.1l8.9,24.0l8.9,21.7l7.1,15.6l8.9,17.4l8.9,15.1l8.9,13.0l8.9,10.9l10.7,10.8l7.1,5.9l7.1,5.0l8.9,5.2l8.9,4.2l16.1,6.0l28.4,8.6l14.3,4.8l14.2,5.7l14.3,6.9l14.2,8.0l14.2,9.1l16.1,11.1l44.5,32.3l14.2,9.6l12.5,7.6l16.0,8.7l14.2,6.7l16.0,6.2l16.1,4.9l19.5,4.5l19.6,3.1l23.2,2.4l26.7,1.5l28.4,0.8l37.4,0.4l169.1,0.1"/>
<path d="M131.6,1324.4l135.3,-0.5l44.5,-0.7l37.4,-1.1l33.8,-1.6l30.2,-2.3l26.7,-2.8l25.0,-3.5l24.9,-4.8l21.3,-5.4l19.6,-6.2l19.6,-8.0l16.0,-8.2l16.0,-10.1l14.3,-10.9l14.2,-13.2l10.7,-11.6l8.9,-11.0l10.7,-14.9l8.9,-13.9l10.7,-18.8l8.9,-17.5l8.9,-19.2l8.9,-20.9l8.9,-22.8l10.6,-29.6l10.7,-32.2l10.7,-34.5l21.4,-74.8l35.6,-132.9l14.2,-51.5l14.2,-47.8l12.5,-37.3l8.9,-23.3l7.1,-16.4l7.1,-14.2l7.2,-11.7l7.1,-9.3l7.1,-6.6l3.6,-2.4l3.5,-1.6l3.6,-1.0l3.5,-0.3l5.4,0.8l3.5,1.4l3.6,2.0l5.3,4.3l7.2,8.0l7.1,10.3l7.1,12.7l7.1,14.7l7.1,16.6l12.5,33.0l12.5,37.0l12.4,39.7l37.4,122.9l12.5,39.0l10.6,31.7l12.5,34.5l12.5,31.7l12.4,28.9l12.5,26.1l12.4,23.5l14.3,24.1l14.2,21.5l16.0,21.8l17.8,21.9l17.8,20.0l19.6,20.2l21.4,20.1l19.6,16.7l17.8,13.6l19.5,13.1l17.8,10.1l17.8,8.4l19.6,7.5l21.4,6.2l21.3,4.5l19.6,2.9l21.4,2.2l24.9,1.6l30.3,1.1l76.5,0.9l185.1,0.1"/>
<path d="M131.6,1324.3l115.7,-0.8l40.9,-0.9l35.6,-1.3l32.1,-1.8l30.2,-2.4l26.7,-3.0l25.0,-3.8l23.1,-4.5l21.4,-5.5l19.5,-6.2l17.8,-7.2l16.1,-7.9l16.0,-9.7l14.2,-10.4l14.3,-12.4l12.4,-12.8l10.7,-12.5l12.5,-16.8l10.6,-16.4l10.7,-18.3l10.7,-20.3l10.7,-22.5l10.7,-24.6l8.9,-22.1l8.9,-23.5l19.5,-56.1l17.8,-55.3l37.4,-120.4l17.8,-54.0l14.3,-39.1l7.1,-17.6l7.1,-16.1l7.1,-14.5l7.1,-12.7l7.2,-10.7l5.3,-6.7l7.1,-7.1l7.1,-4.9l3.6,-1.7l3.6,-1.1l5.3,-0.5l5.3,0.7l3.6,1.1l3.6,1.7l7.1,5.0l7.1,7.2l7.1,9.1l7.1,11.0l7.2,12.7l8.9,18.2l12.4,29.0l12.5,32.3l14.2,39.5l35.6,101.8l19.6,52.5l10.7,26.3l8.9,20.6l10.7,22.8l8.9,17.4l8.9,15.9l8.9,14.6l8.9,13.2l10.6,14.1l8.9,10.5l10.7,11.2l10.7,9.9l10.7,8.8l16.0,11.7l17.8,11.4l64.1,37.6l69.4,42.8l28.5,16.7l23.1,12.3l21.4,10.0l21.3,8.5l21.4,7.1l24.9,6.5l24.9,4.9l28.5,3.8l30.3,2.6l32.0,1.6l41.0,1.0l137.0,0.6"/>
<path d="M131.6,1324.3l112.1,-0.8l39.2,-0.9l33.8,-1.4l30.3,-1.8l28.5,-2.6l24.9,-3.2l23.1,-3.9l23.2,-5.1l19.5,-5.6l17.8,-6.4l17.8,-8.1l16.1,-9.0l14.2,-9.9l14.2,-11.9l12.5,-12.4l10.7,-12.4l10.7,-14.3l10.6,-16.2l10.7,-18.5l10.7,-20.9l10.7,-23.4l8.9,-21.5l10.7,-28.2l8.9,-25.6l8.9,-27.2l17.8,-59.3l16.0,-57.6l35.6,-133.1l16.0,-56.7l14.2,-45.5l7.2,-20.5l7.1,-18.5l7.1,-16.5l5.3,-10.8l7.2,-12.4l5.3,-7.7l7.1,-7.8l5.4,-4.2l3.5,-1.9l3.6,-1.2l5.3,-0.6l5.4,1.1l3.5,1.5l3.6,2.2l5.3,4.5l7.1,8.3l5.4,7.9l7.1,12.5l7.1,14.6l7.1,16.7l12.5,33.1l12.5,37.2l12.4,39.8l35.6,117.6l19.6,60.3l10.7,30.2l10.7,28.0l10.6,25.5l10.7,23.2l10.7,20.8l10.7,18.7l10.7,16.5l12.4,17.1l12.5,15.0l12.4,13.3l14.3,13.6l17.8,15.4l30.2,23.7l42.8,31.2l32.0,22.0l28.5,17.8l24.9,13.6l12.5,6.0l12.4,5.4l12.5,4.9l12.4,4.3l25.0,7.0l23.1,4.9l26.7,3.9l28.5,2.7l33.8,1.9l35.6,1.0l44.5,0.5l194.0,0.2"/>
<path d="M131.6,1324.4l128.2,-0.5l42.7,-0.7l35.6,-1.1l33.8,-1.7l28.5,-2.3l26.7,-2.9l23.1,-3.5l23.2,-4.6l21.3,-5.5l19.6,-6.6l17.8,-7.6l16.0,-8.5l16.0,-10.5l14.3,-11.5l12.4,-12.0l10.7,-12.1l8.9,-11.4l10.7,-15.6l8.9,-14.6l8.9,-16.3l8.9,-18.1l8.9,-20.0l8.9,-21.8l8.9,-23.8l10.7,-31.1l8.9,-28.0l10.7,-35.9l19.5,-71.3l35.6,-138.7l14.3,-53.8l12.4,-43.8l12.5,-39.4l8.9,-24.5l7.1,-17.2l7.1,-14.8l7.2,-12.1l7.1,-9.5l3.5,-3.6l3.6,-2.9l3.6,-2.2l3.5,-1.5l5.4,-0.8l5.3,0.9l3.6,1.5l3.5,2.2l5.4,4.7l7.1,8.7l7.1,11.4l7.1,13.8l7.1,16.2l7.2,18.3l12.4,36.3l12.5,40.6l44.5,158.3l19.6,65.9l10.6,33.0l8.9,25.6l10.7,28.4l8.9,21.5l8.9,19.6l8.9,17.7l8.9,16.0l10.7,17.0l8.9,12.5l10.7,13.2l10.7,11.6l12.4,11.7l10.7,8.8l10.7,7.9l12.4,8.4l14.3,8.9l19.6,11.3l32.0,17.9l58.7,31.6l30.3,14.9l28.5,12.3l26.7,9.6l26.7,7.7l24.9,5.6l26.7,4.5l28.5,3.2l33.8,2.5l35.6,1.4l42.7,0.8l151.3,0.4"/>
<path d="M131.6,1324.3l108.6,-0.9l39.1,-1.0l33.9,-1.4l30.2,-2.0l28.5,-2.6l24.9,-3.2l23.2,-3.8l23.1,-5.1l19.6,-5.6l17.8,-6.3l17.8,-7.8l16.0,-8.8l14.2,-9.5l14.3,-11.5l12.4,-11.8l12.5,-14.0l10.7,-13.8l10.7,-15.7l10.6,-17.8l10.7,-20.0l10.7,-22.3l8.9,-20.4l10.7,-26.8l8.9,-24.2l8.9,-25.8l17.8,-55.9l17.8,-60.6l35.6,-126.2l16.0,-53.7l14.2,-43.4l7.2,-19.5l7.1,-17.7l7.1,-15.9l5.3,-10.5l7.2,-12.0l5.3,-7.5l7.1,-7.8l5.4,-4.2l3.5,-2.0l3.6,-1.3l5.3,-0.7l5.4,0.7l3.5,1.3l3.6,2.0l5.3,4.2l7.1,7.8l5.4,7.4l7.1,12.0l7.1,14.1l7.1,16.2l12.5,32.4l12.5,36.7l12.4,39.7l35.6,117.3l10.7,33.2l10.7,31.0l12.4,32.9l10.7,24.9l10.7,21.6l5.3,9.6l7.2,11.6l8.9,12.5l8.9,10.5l8.9,8.6l10.6,8.3l8.9,5.5l8.9,4.6l33.9,14.2l14.2,7.1l8.9,5.3l7.1,4.8l14.3,11.3l12.4,11.6l14.3,15.1l12.4,14.3l33.8,40.4l16.1,17.9l16.0,16.1l14.2,12.4l10.7,8.0l12.5,8.0l12.4,6.6l12.5,5.3l14.2,4.7l14.3,3.4l16.0,2.8l16.0,1.9l33.8,2.0l46.3,1.0l274.1,0.3"/>
<path d="M131.6,1324.3l113.9,-0.9l41.0,-0.9l35.6,-1.5l32.0,-2.0l28.5,-2.7l26.7,-3.4l23.1,-3.9l23.2,-5.1l19.5,-5.6l19.6,-7.0l17.8,-8.1l16.0,-8.9l16.1,-11.0l14.2,-11.9l12.5,-12.3l12.4,-14.4l10.7,-14.2l10.7,-16.2l10.7,-18.2l10.6,-20.5l10.7,-22.9l10.7,-25.4l10.7,-27.8l8.9,-25.1l8.9,-26.6l17.8,-57.9l17.8,-62.5l37.4,-136.5l16.0,-55.2l14.2,-44.5l7.1,-20.1l7.2,-18.2l7.1,-16.4l7.1,-14.2l7.1,-11.9l5.4,-7.4l7.1,-7.6l5.3,-4.1l3.6,-1.9l3.5,-1.2l5.4,-0.6l5.3,0.9l3.6,1.4l3.5,2.0l7.2,6.1l7.1,8.5l7.1,11.0l7.1,13.1l7.1,15.3l8.9,21.8l12.5,34.7l14.2,44.5l12.5,41.7l37.4,129.0l21.3,68.9l10.7,31.7l10.7,29.5l10.7,27.2l10.7,24.9l10.6,22.4l10.7,20.3l10.7,18.0l10.7,16.1l10.7,14.3l12.4,14.7l12.5,12.9l12.4,11.3l10.7,8.6l10.7,7.9l10.7,7.2l12.4,7.7l26.7,14.7l30.3,14.5l32.0,13.2l30.3,10.6l30.3,8.7l16.0,3.9l16.0,3.3l26.7,4.5l28.5,3.5l30.2,2.5l35.6,1.9l37.4,1.0l44.5,0.6l169.1,0.3"/>
<path d="M131.6,1324.3l121.0,-0.8l42.8,-0.8l37.3,-1.2l33.9,-1.8l30.2,-2.3l28.5,-3.0l24.9,-3.5l24.9,-4.7l21.4,-5.1l19.6,-5.9l19.6,-7.4l17.8,-8.5l16.0,-9.3l14.2,-9.9l14.3,-11.9l12.4,-12.1l12.5,-14.1l12.4,-16.2l10.7,-15.7l12.5,-20.7l10.7,-19.9l10.6,-21.8l10.7,-23.9l8.9,-21.4l10.7,-27.5l19.6,-54.9l17.8,-54.0l39.1,-123.3l17.8,-52.9l14.3,-38.3l7.1,-17.3l7.1,-15.8l7.1,-14.3l7.2,-12.5l7.1,-10.7l5.3,-6.8l7.1,-7.1l7.2,-5.1l3.5,-1.7l3.6,-1.2l5.3,-0.7l5.4,0.5l3.5,1.1l3.6,1.6l7.1,4.8l7.1,6.9l5.4,6.6l7.1,10.4l7.1,12.4l7.1,14.1l7.1,15.6l7.2,17.2l14.2,37.8l16.0,46.9l33.8,104.2l14.3,42.6l16.0,44.8l16.0,40.2l8.9,20.2l8.9,18.3l8.9,16.6l8.9,14.7l8.9,12.9l8.9,11.1l8.9,9.5l8.9,7.9l7.1,5.2l8.9,5.5l8.9,4.2l10.7,3.8l8.9,2.4l8.9,1.8l37.4,5.3l16.0,3.1l17.8,5.1l8.9,3.4l8.9,3.9l16.0,8.5l17.8,11.2l16.1,11.2l46.2,34.1l14.3,9.7l12.4,7.8l16.1,8.8l14.2,6.8l16.0,6.4l16.0,5.1l17.8,4.3l19.6,3.5l21.4,2.4l24.9,1.8l26.7,1.0l33.8,0.6l124.6,0.3"/>
<path d="M131.6,1324.3l121.0,-0.8l41.0,-0.8l35.6,-1.3l32.0,-1.8l30.3,-2.5l26.7,-3.2l24.9,-3.9l23.1,-4.8l21.4,-5.8l19.6,-6.7l17.8,-7.7l16.0,-8.5l16.0,-10.5l14.3,-11.4l12.4,-11.7l12.5,-13.8l10.7,-13.6l12.4,-18.3l10.7,-17.9l10.7,-20.1l10.7,-22.4l10.6,-24.8l10.7,-27.3l8.9,-24.6l8.9,-26.1l17.8,-56.7l17.8,-61.4l37.4,-133.9l16.0,-54.1l14.3,-43.6l7.1,-19.6l7.1,-17.9l7.1,-16.0l7.1,-13.9l7.2,-11.6l5.3,-7.2l7.1,-7.5l5.4,-3.9l3.5,-1.8l3.6,-1.2l5.3,-0.5l5.4,0.9l3.5,1.4l3.6,2.0l7.1,6.0l7.1,8.4l7.1,10.7l7.2,12.9l7.1,14.9l7.1,16.7l12.5,33.1l14.2,42.5l12.5,39.9l35.6,117.3l19.5,60.5l10.7,30.5l10.7,28.3l10.7,26.1l10.7,23.7l10.6,21.4l10.7,19.2l10.7,17.2l10.7,15.3l10.7,13.6l12.4,14.1l12.5,12.5l14.2,12.8l12.5,10.1l12.4,9.5l32.1,22.4l37.4,24.0l32.0,18.7l26.7,13.7l24.9,10.8l24.9,8.8l25.0,6.7l23.1,4.8l24.9,3.6l28.5,2.7l32.0,1.7l33.9,1.0l42.7,0.5l174.4,0.3"/>
<path d="M131.6,1324.3l113.9,-0.8l41.0,-0.9l33.8,-1.3l32.0,-2.0l28.5,-2.5l26.7,-3.3l23.1,-3.9l23.2,-5.0l19.6,-5.5l17.8,-6.2l17.8,-7.8l16.0,-8.6l16.0,-10.7l14.2,-11.6l12.5,-12.0l10.7,-12.0l8.9,-11.3l10.7,-15.2l8.9,-14.3l8.9,-15.9l8.9,-17.4l8.9,-19.2l8.9,-20.8l8.9,-22.7l10.6,-29.5l10.7,-31.9l10.7,-34.2l19.6,-67.5l35.6,-130.5l14.2,-50.7l14.3,-47.2l12.4,-36.8l8.9,-23.0l7.1,-16.2l7.2,-14.0l7.1,-11.6l7.1,-9.0l7.1,-6.5l3.6,-2.2l3.5,-1.6l5.4,-1.0l5.3,0.5l3.6,1.2l3.5,1.9l3.6,2.6l3.6,3.2l7.1,8.5l7.1,10.9l7.1,13.4l7.1,15.6l8.9,22.3l12.5,35.8l12.5,40.0l14.2,49.1l33.8,120.4l17.8,59.5l10.7,33.0l8.9,25.7l8.9,23.7l8.9,21.8l7.1,15.9l8.9,18.2l7.1,13.0l8.9,14.6l8.9,12.8l8.9,11.0l8.9,9.5l8.9,8.0l7.2,5.5l8.9,5.9l8.9,4.9l8.9,4.2l10.6,4.1l10.7,3.6l51.6,15.2l25.0,9.1l16.0,7.0l16.0,7.7l65.9,35.0l28.4,13.9l17.8,7.5l16.1,5.9l16.0,5.0l16.0,4.1l21.4,4.4l23.1,3.4l24.9,2.5l28.5,1.6l30.3,1.0l39.1,0.5l151.3,0.3"/>
<path d="M131.6,1324.3l121.0,-0.7l41.0,-0.7l35.6,-1.2l32.0,-1.8l30.3,-2.4l26.7,-3.0l23.1,-3.6l23.2,-4.6l21.3,-5.6l19.6,-6.5l17.8,-7.5l16.0,-8.4l16.0,-10.3l14.3,-11.2l12.4,-11.7l10.7,-11.7l8.9,-10.9l10.7,-14.9l8.9,-14.0l8.9,-15.4l8.9,-17.1l8.9,-18.7l8.9,-20.4l8.9,-22.1l10.7,-28.9l8.9,-25.9l10.7,-33.1l21.3,-71.8l35.6,-127.5l14.3,-49.3l14.2,-45.8l12.5,-35.6l7.1,-18.0l7.1,-16.1l7.1,-13.9l7.1,-11.7l7.2,-9.3l7.1,-6.7l3.5,-2.5l3.6,-1.7l3.6,-1.2l3.5,-0.5l5.4,0.5l3.5,1.2l3.6,1.8l5.3,3.8l7.1,7.3l5.4,6.9l7.1,11.3l5.3,9.7l7.2,14.7l12.4,29.6l12.5,33.5l12.4,36.2l35.6,106.5l10.7,30.2l10.7,28.4l12.5,30.6l10.6,23.7l12.5,24.9l12.5,22.0l10.6,16.7l10.7,15.1l12.5,15.9l12.4,14.7l57.0,62.2l53.4,61.6l17.8,19.9l21.4,21.9l10.6,9.9l8.9,7.6l14.3,11.0l14.2,9.5l14.3,7.9l14.2,6.5l14.2,5.2l16.1,4.5l17.8,3.7l17.8,2.5l16.0,1.6l19.6,1.3l49.8,1.4l73.0,0.5l192.2,0.1"/>
<path d="M131.6,1324.4l142.4,-0.4l44.5,-0.6l37.4,-1.0l33.8,-1.5l30.3,-2.1l26.7,-2.7l24.9,-3.6l24.9,-4.7l21.4,-5.4l19.5,-6.4l17.8,-7.3l16.1,-8.2l16.0,-10.2l14.2,-11.2l14.3,-13.5l10.6,-12.0l10.7,-13.8l10.7,-15.9l8.9,-15.0l8.9,-16.7l8.9,-18.5l8.9,-20.5l8.9,-22.4l8.9,-24.4l10.7,-32.0l8.9,-28.8l10.7,-36.9l19.5,-73.4l35.6,-142.7l12.5,-48.6l14.2,-51.6l12.5,-40.2l7.1,-20.2l7.1,-18.0l7.2,-15.4l7.1,-12.8l7.1,-9.9l3.6,-3.8l3.5,-3.1l3.6,-2.4l3.5,-1.5l5.4,-0.9l5.3,0.9l3.6,1.6l3.5,2.3l5.4,5.0l7.1,9.1l7.1,12.0l7.1,14.6l7.2,17.2l7.1,19.3l12.4,38.5l12.5,43.0l44.5,168.0l17.8,63.7l10.7,35.2l8.9,27.4l8.9,25.3l8.9,23.2l7.1,17.0l8.9,19.4l8.9,17.3l8.9,15.4l8.9,13.6l10.7,14.1l8.9,10.2l10.7,10.5l8.9,7.6l10.6,7.9l10.7,7.0l12.5,7.2l17.8,9.3l55.2,27.0l72.9,37.8l25.0,11.8l21.3,9.0l23.2,8.3l21.3,6.2l23.2,5.4l24.9,4.2l26.7,3.1l30.2,2.2l32.1,1.3l39.1,0.7l144.2,0.4"/>
<path d="M131.6,1324.3l117.5,-0.7l40.9,-0.9l33.8,-1.2l32.1,-1.8l28.5,-2.4l26.7,-3.1l23.1,-3.7l23.1,-4.7l21.4,-5.7l17.8,-6.1l17.8,-7.5l16.0,-8.4l16.0,-10.4l14.3,-11.3l12.4,-11.7l12.5,-13.8l10.7,-13.7l10.7,-15.6l10.6,-17.7l10.7,-19.9l10.7,-22.3l8.9,-20.5l10.7,-26.8l8.9,-24.2l8.9,-25.9l17.8,-56.2l17.8,-60.9l35.6,-126.6l16.0,-53.9l14.2,-43.1l12.5,-32.7l7.1,-16.1l5.4,-10.7l7.1,-12.2l5.3,-7.6l7.1,-7.9l5.4,-4.3l3.5,-2.0l3.6,-1.3l5.3,-0.7l5.4,0.8l3.5,1.3l3.6,2.1l5.3,4.3l7.2,8.1l5.3,7.6l7.1,12.4l5.4,10.8l7.1,16.2l12.4,32.9l14.3,43.5l14.2,47.9l32.1,113.5l14.2,48.9l16.0,51.1l14.3,40.7l8.9,22.8l7.1,16.6l8.9,18.7l7.1,13.3l7.1,11.8l8.9,12.6l8.9,10.3l8.9,8.1l8.9,6.0l8.9,4.1l8.9,2.3l10.7,0.8l8.9,-0.7l10.7,-2.2l10.7,-3.1l30.2,-10.1l10.7,-2.8l8.9,-1.5l10.7,-0.5l8.9,0.6l10.7,2.2l8.9,3.1l8.9,4.3l8.9,5.4l8.9,6.3l10.6,8.8l17.8,16.7l35.6,36.7l16.1,15.8l16.0,14.4l14.2,11.2l16.0,10.7l8.9,5.0l8.9,4.5l8.9,3.8l8.9,3.3l17.8,5.2l16.1,3.3l17.8,2.5l19.5,1.7l25.0,1.2l58.7,0.9l158.4,0.1"/>
<path d="M131.6,1324.3l117.5,-0.7l40.9,-0.9l33.8,-1.3l30.3,-1.8l28.5,-2.5l26.7,-3.3l23.1,-3.9l23.2,-5.1l21.3,-6.2l17.8,-6.5l17.8,-8.2l16.0,-9.2l14.3,-10.0l14.2,-12.1l12.5,-12.6l10.7,-12.7l8.9,-11.9l10.6,-16.2l8.9,-15.3l8.9,-16.9l8.9,-18.8l8.9,-20.6l8.9,-22.5l8.9,-24.5l10.7,-31.9l8.9,-28.7l10.7,-36.7l19.6,-72.7l35.6,-140.8l12.4,-47.8l14.3,-51.0l12.4,-39.8l8.9,-24.8l7.2,-17.3l7.1,-15.0l7.1,-12.2l7.1,-9.5l3.6,-3.7l3.5,-2.9l3.6,-2.2l3.6,-1.5l5.3,-0.7l5.3,0.9l3.6,1.6l3.6,2.3l5.3,4.8l7.1,9.0l7.1,11.7l7.2,14.2l7.1,16.7l7.1,18.9l12.5,37.5l12.4,42.1l12.5,45.1l35.6,133.2l19.6,68.4l10.6,34.2l8.9,26.5l10.7,29.2l8.9,22.3l8.9,20.2l10.7,21.8l8.9,16.1l10.7,17.2l10.7,15.0l10.6,13.1l10.7,11.5l12.5,11.7l10.7,9.0l10.6,8.1l12.5,8.7l14.2,9.3l42.8,25.6l23.1,13.1l19.6,10.5l28.5,13.9l26.7,11.1l24.9,8.4l12.4,3.5l14.3,3.4l23.1,4.4l24.9,3.4l28.5,2.4l32.1,1.6l33.8,0.8l44.5,0.4l201.1,0.2"/>
<path d="M131.6,1324.3l112.1,-0.8l39.2,-0.9l33.8,-1.3l30.3,-1.9l26.7,-2.5l24.9,-3.2l23.1,-4.0l21.4,-4.9l19.6,-5.7l17.8,-6.6l17.8,-8.2l14.2,-8.2l14.3,-10.0l14.2,-12.1l12.5,-12.7l12.4,-15.0l10.7,-15.0l10.7,-17.2l10.7,-19.6l10.6,-22.2l8.9,-20.6l10.7,-27.3l8.9,-24.9l16.0,-49.9l17.8,-62.1l16.1,-60.6l35.6,-140.5l14.2,-53.1l14.2,-48.2l7.2,-21.5l5.3,-14.7l7.1,-17.7l5.4,-11.7l7.1,-13.2l5.3,-8.1l7.1,-8.2l5.4,-4.2l5.3,-2.4l5.4,-0.7l5.3,1.1l5.3,2.8l5.4,4.6l5.3,6.3l5.4,7.9l5.3,9.5l5.3,11.0l7.2,16.9l5.3,14.2l7.1,20.8l12.5,40.8l14.2,51.5l32.1,123.5l14.2,52.9l14.2,49.0l14.3,43.8l8.9,24.2l7.1,17.6l7.1,15.8l8.9,17.4l7.1,12.1l8.9,12.8l7.2,8.5l8.9,8.5l7.1,5.4l7.1,4.3l7.1,3.2l7.1,2.3l7.2,1.6l8.9,1.2l32.0,1.8l16.0,2.1l8.9,2.1l7.1,2.4l8.9,3.7l7.2,3.7l7.1,4.2l8.9,6.2l16.0,13.0l16.0,15.1l33.8,34.3l14.3,13.9l14.2,12.8l14.3,11.5l16.0,10.9l16.0,8.9l16.0,7.0l17.8,5.7l17.8,4.0l19.6,2.9l23.1,2.0l26.7,1.1l67.7,0.8l227.8,0.1"/>
<path d="M131.6,1324.2l101.5,-1.2l39.1,-1.2l33.8,-1.6l30.3,-2.2l28.5,-2.8l26.7,-3.7l23.1,-4.2l21.4,-4.9l19.6,-5.7l17.8,-6.4l17.8,-8.0l16.0,-8.8l14.2,-9.5l14.3,-11.3l14.2,-13.4l12.5,-13.8l10.6,-13.6l10.7,-15.3l10.7,-17.2l10.7,-19.2l10.7,-21.3l10.6,-23.4l10.7,-25.7l8.9,-23.0l8.9,-24.5l19.6,-58.4l17.8,-57.3l37.4,-124.8l16.0,-50.7l14.2,-41.0l7.2,-18.6l7.1,-17.1l7.1,-15.4l7.1,-13.6l7.1,-11.6l5.4,-7.3l7.1,-7.8l7.1,-5.6l3.6,-1.9l3.5,-1.3l5.4,-0.9l5.3,0.5l3.6,1.1l3.5,1.6l5.4,3.6l7.1,6.7l5.3,6.5l7.2,10.6l5.3,9.3l7.1,14.0l7.1,15.8l7.2,17.4l14.2,38.8l16.0,48.4l33.8,108.0l16.1,49.1l16.0,45.3l8.9,23.1l7.1,17.1l8.9,19.9l8.9,18.0l8.9,16.1l10.7,16.9l8.9,12.3l10.7,12.7l10.6,10.7l10.7,9.2l16.0,11.6l42.8,26.6l23.1,16.1l23.1,18.5l53.4,46.0l14.3,11.2l12.4,8.9l16.1,10.1l16.0,8.4l16.0,6.8l16.0,5.2l19.6,4.7l21.4,3.4l24.9,2.4l30.2,1.5l33.9,0.7l49.8,0.4l220.7,0.2"/>
<path d="M131.6,1324.4l297.3,-0.3l46.2,-1.1l17.8,-1.1l14.3,-1.4l17.8,-2.6l14.2,-3.2l14.3,-4.5l12.4,-5.3l12.5,-7.0l10.7,-7.6l10.6,-9.3l10.7,-11.4l10.7,-13.8l8.9,-13.5l8.9,-15.4l8.9,-17.7l8.9,-19.9l8.9,-22.4l8.9,-24.8l7.1,-21.8l8.9,-29.4l8.9,-32.0l8.9,-34.3l10.7,-44.2l19.6,-87.8l35.6,-170.0l12.4,-57.7l14.3,-61.2l12.4,-47.6l7.2,-24.0l7.1,-21.4l7.1,-18.4l7.1,-15.3l7.1,-12.0l3.6,-4.7l3.6,-3.8l3.5,-2.9l3.6,-2.1l5.3,-1.3l5.4,0.7l3.5,1.7l3.6,2.5l3.5,3.4l3.6,4.3l7.1,11.2l7.1,14.5l7.2,17.6l7.1,20.6l7.1,23.3l12.5,46.2l14.2,59.7l12.5,56.2l33.8,157.6l19.6,85.5l8.9,35.9l8.9,33.6l8.9,31.2l8.9,28.6l7.1,21.0l8.9,23.8l8.9,21.3l8.9,18.7l8.9,16.3l8.9,14.1l8.9,12.1l10.7,12.0l5.3,5.2l7.1,6.0l12.5,8.6l14.2,7.4l8.9,3.7l8.9,3.0l19.6,5.4l40.9,9.5l23.2,5.8l67.6,19.2l23.2,6.2l24.9,5.8l24.9,4.7l23.1,3.3l23.2,2.4l26.7,1.9l28.5,1.2l71.2,1.1l154.8,0.2"/>
<path d="M131.6,1324.4l284.8,-0.3l46.3,-1.2l17.8,-1.0l16.0,-1.6l17.8,-2.6l16.0,-3.7l14.3,-4.6l12.4,-5.4l12.5,-7.0l10.7,-7.6l10.6,-9.3l10.7,-11.2l10.7,-13.5l8.9,-13.1l8.9,-15.0l8.9,-17.0l8.9,-19.2l8.9,-21.4l8.9,-23.7l7.1,-20.7l8.9,-28.0l10.7,-36.6l8.9,-33.0l10.7,-42.3l19.6,-83.7l35.6,-161.8l14.2,-62.6l14.2,-58.0l12.5,-45.0l8.9,-28.1l7.1,-19.7l7.1,-16.9l7.2,-13.9l7.1,-10.9l3.5,-4.2l3.6,-3.3l3.6,-2.6l3.5,-1.7l5.4,-1.0l5.3,0.9l3.6,1.7l3.5,2.5l3.6,3.3l3.5,4.2l7.2,10.7l7.1,13.8l7.1,16.7l7.1,19.5l8.9,27.8l12.5,44.5l14.2,57.2l12.5,53.8l33.8,150.5l19.6,82.1l10.7,41.3l8.9,32.1l8.9,29.8l8.9,27.4l7.1,20.2l8.9,22.9l8.9,20.5l8.9,18.0l8.9,15.8l8.9,13.7l8.9,11.7l10.7,11.7l5.3,4.9l7.1,5.9l12.5,8.2l7.1,3.8l7.1,3.2l14.3,5.0l19.5,4.9l46.3,8.6l24.9,5.4l26.7,6.8l51.7,14.7l23.1,6.2l26.7,6.2l24.9,4.5l23.2,3.3l23.1,2.3l24.9,1.7l28.5,1.2l67.6,1.1l144.2,0.2"/>
<path d="M131.6,1324.4l151.3,-0.1l60.5,-0.6l24.9,-0.8l19.6,-1.1l17.8,-1.7l14.3,-2.0l16.0,-3.3l16.0,-4.6l14.2,-5.7l12.5,-6.5l12.5,-8.1l10.6,-8.7l10.7,-10.3l10.7,-12.3l10.7,-14.4l10.7,-16.8l10.6,-19.4l8.9,-18.2l10.7,-24.5l8.9,-22.6l8.9,-24.7l10.7,-32.3l16.0,-53.6l17.8,-66.1l16.0,-63.9l37.4,-154.4l16.0,-62.6l14.3,-50.6l7.1,-22.9l7.1,-21.0l7.1,-18.9l7.2,-16.6l7.1,-14.2l5.3,-8.9l7.1,-9.5l3.6,-3.7l3.6,-3.0l3.5,-2.2l3.6,-1.6l5.3,-1.0l3.6,0.3l3.5,1.0l3.6,1.7l3.6,2.5l3.5,3.1l3.6,3.9l7.1,9.7l7.1,12.4l7.1,14.9l7.2,17.3l8.9,24.6l7.1,21.9l7.1,23.5l14.2,51.2l14.3,55.0l35.6,141.8l21.3,79.8l10.7,36.8l10.7,34.2l10.7,31.4l8.9,23.9l8.9,21.8l8.9,19.9l8.9,17.8l10.7,18.9l10.6,16.3l10.7,14.0l10.7,11.8l10.7,10.0l7.1,5.7l8.9,6.3l7.1,4.4l8.9,4.9l17.8,7.9l23.2,7.9l40.9,11.0l81.9,19.9l39.1,8.2l37.4,6.0l26.7,3.3l28.5,2.4l30.3,1.8l33.8,1.1l81.9,1.0l190.4,0.2"/>
<path d="M131.6,1324.4l140.6,-0.1l60.5,-0.8l23.2,-0.8l19.6,-1.2l17.8,-1.7l16.0,-2.4l16.0,-3.3l16.0,-4.6l14.3,-5.6l12.4,-6.3l12.5,-7.8l12.4,-9.7l10.7,-10.0l10.7,-11.8l10.7,-13.7l10.7,-15.8l10.6,-18.1l8.9,-17.0l10.7,-22.6l8.9,-20.8l10.7,-27.4l10.7,-29.9l17.8,-55.3l17.8,-61.2l16.0,-58.9l37.4,-141.8l16.0,-57.9l16.0,-52.7l7.1,-21.2l7.2,-19.6l7.1,-17.7l7.1,-15.8l7.1,-13.6l7.1,-11.3l7.2,-9.0l7.1,-6.6l3.5,-2.3l3.6,-1.7l3.6,-1.1l3.5,-0.4l3.6,0.2l3.5,0.9l3.6,1.5l3.6,2.1l7.1,6.1l3.5,4.0l5.4,7.1l7.1,11.5l8.9,17.4l7.1,16.3l8.9,22.9l14.3,41.8l14.2,46.8l14.2,50.2l37.4,136.1l21.4,73.2l10.7,33.9l10.6,31.6l10.7,29.3l10.7,26.6l8.9,20.3l10.7,22.0l8.9,16.4l10.7,17.5l10.6,15.3l10.7,13.2l10.7,11.4l12.5,11.2l7.1,5.6l8.9,6.1l8.9,5.5l8.9,4.7l10.7,5.1l10.6,4.5l25.0,8.7l19.5,6.0l26.7,7.4l55.2,14.1l41.0,8.8l37.3,6.2l26.7,3.3l28.5,2.5l30.3,1.8l35.6,1.2l81.9,1.0l190.4,0.2"/>
<path d="M131.6,1324.4l181.6,-0.1l64.0,-0.4l46.3,-1.6l17.8,-1.3l16.0,-1.8l17.8,-3.1l16.1,-3.9l14.2,-4.9l14.2,-6.4l12.5,-7.2l12.5,-9.0l10.6,-9.4l10.7,-11.2l10.7,-13.1l10.7,-15.3l10.7,-17.6l10.6,-20.1l10.7,-22.8l10.7,-25.5l8.9,-23.4l10.7,-30.5l8.9,-27.6l8.9,-29.3l17.8,-63.3l17.8,-68.3l37.4,-148.8l16.0,-60.5l16.0,-54.9l7.1,-22.0l7.1,-20.1l7.2,-18.2l7.1,-16.1l7.1,-13.7l7.1,-11.2l7.1,-8.7l3.6,-3.4l3.6,-2.6l3.5,-2.0l3.6,-1.4l5.3,-0.6l3.6,0.4l3.5,1.1l3.6,1.7l3.6,2.5l7.1,6.9l7.1,9.5l7.1,12.1l8.9,18.3l7.1,17.2l8.9,24.3l14.3,44.4l14.2,49.9l14.3,53.3l35.6,137.5l21.3,77.6l10.7,35.8l10.7,33.3l10.7,30.7l8.9,23.4l8.9,21.5l8.9,19.5l8.9,17.5l10.6,18.7l8.9,13.6l10.7,14.3l8.9,10.2l10.7,10.6l7.1,6.1l8.9,6.8l7.1,4.8l8.9,5.2l17.8,8.8l23.2,8.9l17.8,5.8l24.9,7.4l60.5,16.8l37.4,8.8l33.8,6.1l24.9,3.4l25.0,2.5l28.4,1.8l32.1,1.2l74.7,1.0l179.8,0.1"/>
<path d="M131.6,1324.4l174.4,-0.1l65.9,-0.5l46.3,-1.5l19.6,-1.5l16.0,-1.8l19.6,-3.3l16.0,-3.9l14.2,-4.6l14.3,-6.2l12.4,-6.7l12.5,-8.4l12.4,-10.3l10.7,-10.4l12.5,-14.5l10.7,-14.4l10.6,-16.5l10.7,-18.7l10.7,-21.1l10.7,-23.4l10.7,-25.9l10.6,-28.3l17.8,-52.2l19.6,-64.0l17.8,-62.6l37.4,-136.1l17.8,-61.6l16.0,-50.4l8.9,-25.1l7.1,-18.4l7.2,-16.6l7.1,-14.7l7.1,-12.7l7.1,-10.6l7.1,-8.3l7.2,-6.0l3.5,-2.2l3.6,-1.5l3.5,-1.0l3.6,-0.3l3.6,0.3l3.5,0.8l3.6,1.5l3.5,2.0l7.2,5.9l3.5,3.7l5.4,6.8l7.1,10.8l8.9,16.5l7.1,15.4l8.9,21.7l14.2,39.6l16.1,50.4l14.2,48.2l39.2,136.7l21.3,70.1l10.7,32.5l10.7,30.3l10.7,28.1l10.6,25.7l8.9,19.6l10.7,21.3l8.9,16.0l10.7,17.2l10.7,15.0l10.7,13.2l10.6,11.5l10.7,10.0l7.1,5.9l8.9,6.7l8.9,6.0l10.7,6.5l21.4,10.9l26.7,11.2l35.6,12.6l35.6,10.8l33.8,8.4l32.0,6.1l25.0,3.5l24.9,2.6l28.5,1.9l32.0,1.3l74.8,1.0l181.5,0.1"/>
<path d="M131.6,1324.4l195.8,-0.1l69.4,-0.4l49.9,-1.5l19.5,-1.3l16.1,-1.6l19.5,-3.0l16.1,-3.5l14.2,-4.3l14.2,-5.6l14.3,-7.1l12.4,-7.9l12.5,-9.6l10.7,-9.9l12.4,-13.5l10.7,-13.6l12.5,-18.4l10.7,-18.0l10.6,-20.3l10.7,-22.6l10.7,-24.9l10.7,-27.3l8.9,-24.4l10.7,-31.3l19.5,-62.5l17.8,-61.1l39.2,-139.4l17.8,-60.2l16.0,-49.1l8.9,-24.6l7.1,-17.9l7.2,-16.3l7.1,-14.4l7.1,-12.5l7.1,-10.4l7.1,-8.2l7.2,-6.0l3.5,-2.2l3.6,-1.6l3.5,-1.0l3.6,-0.4l5.3,0.5l3.6,1.0l3.6,1.6l7.1,4.9l7.1,7.2l7.1,9.3l7.1,11.4l7.2,13.4l7.1,15.2l7.1,17.0l7.1,18.4l16.0,46.4l17.8,57.3l41.0,140.0l17.8,58.4l19.6,59.3l8.9,24.7l8.9,23.2l10.6,25.7l10.7,23.4l10.7,21.1l10.7,18.8l10.7,16.6l12.4,16.9l12.5,14.4l12.4,12.3l8.9,7.6l8.9,6.8l8.9,6.1l8.9,5.4l19.6,10.4l24.9,10.9l33.9,12.4l37.3,11.8l33.9,9.0l33.8,7.1l24.9,3.9l24.9,2.9l28.5,2.2l30.3,1.5l32.0,0.8l39.2,0.5l154.8,0.2"/>
<path d="M131.6,1324.4l192.2,-0.1l69.5,-0.4l49.8,-1.4l19.6,-1.3l17.8,-1.8l19.6,-2.9l16.0,-3.5l16.0,-4.7l14.2,-5.5l14.3,-7.1l12.4,-7.7l12.5,-9.4l10.7,-9.6l12.4,-13.1l10.7,-13.0l12.5,-17.7l10.7,-17.2l12.4,-22.8l10.7,-21.9l10.7,-24.1l10.7,-26.2l8.9,-23.5l10.6,-30.1l19.6,-59.8l17.8,-58.5l41.0,-139.6l17.8,-57.5l16.0,-47.2l8.9,-23.6l7.1,-17.3l8.9,-19.4l7.1,-13.6l7.1,-11.8l7.2,-9.8l7.1,-7.8l7.1,-5.6l7.1,-3.6l3.6,-0.9l3.5,-0.4l3.6,0.1l3.6,0.7l7.1,3.0l7.1,5.2l7.1,7.3l7.1,9.3l7.2,11.2l7.1,13.1l7.1,14.8l7.1,16.5l8.9,22.6l16.0,45.4l17.8,55.8l39.2,130.1l17.8,57.1l19.6,58.1l8.9,24.4l8.9,22.9l10.7,25.5l10.6,23.2l10.7,20.8l10.7,18.6l10.7,16.4l12.4,16.5l10.7,12.1l12.5,12.0l14.2,11.1l7.1,4.8l8.9,5.3l17.8,8.7l21.4,8.1l33.8,10.3l85.5,23.6l33.8,8.3l30.2,6.2l23.2,3.7l24.9,3.0l26.7,2.3l28.5,1.5l30.2,0.9l35.6,0.6l126.4,0.3"/>
<path d="M131.6,1317.8l23.1,-2.7l23.2,-3.3l24.9,-4.3l24.9,-4.9l39.2,-8.8l67.6,-16.2l30.3,-7.6l23.1,-6.4l16.0,-5.0l14.3,-5.2l14.2,-5.9l12.5,-6.0l12.4,-6.8l10.7,-6.8l10.7,-7.5l10.7,-8.5l10.7,-9.5l10.6,-10.5l10.7,-11.6l10.7,-12.7l10.7,-13.9l10.7,-15.0l10.6,-16.1l10.7,-17.2l19.6,-34.1l19.6,-37.0l19.6,-39.0l40.9,-83.5l21.4,-41.8l10.6,-19.6l10.7,-18.6l8.9,-14.4l8.9,-13.5l10.7,-14.6l10.7,-12.9l10.7,-10.9l8.9,-7.4l10.6,-7.0l8.9,-4.1l8.9,-2.4l8.9,-0.8l8.9,0.8l8.9,2.4l8.9,4.1l10.7,7.0l8.9,7.5l10.7,10.9l8.9,10.6l10.7,14.5l8.9,13.3l10.7,17.4l10.6,18.8l10.7,19.8l23.2,46.1l49.8,104.3l23.1,46.8l12.5,23.9l12.5,23.0l12.4,21.6l10.7,17.6l14.2,21.8l14.3,20.0l12.4,15.9l14.3,16.5l14.2,14.6l14.3,12.9l14.2,11.3l14.2,9.8l14.3,8.4l16.0,7.9l16.0,6.6l17.8,5.9l17.8,4.6l19.6,3.9l19.6,2.9l23.1,2.5l21.4,1.6l24.9,1.2l60.5,1.4l83.7,0.5l210.0,0.0"/>
<path d="M131.6,1324.1l76.5,-1.0l53.4,-2.3l23.2,-1.7l21.3,-2.2l19.6,-2.7l17.8,-3.2l17.8,-4.0l16.0,-4.4l16.1,-5.4l16.0,-6.4l14.2,-6.7l14.3,-7.8l14.2,-8.8l14.2,-10.1l12.5,-9.9l12.5,-10.9l12.4,-12.1l12.5,-13.1l12.4,-14.3l12.5,-15.3l12.5,-16.5l12.4,-17.5l21.4,-32.4l23.1,-37.8l21.4,-36.9l48.0,-85.0l23.2,-39.2l12.4,-19.9l10.7,-16.2l10.7,-15.1l10.7,-14.1l12.4,-14.7l10.7,-11.1l10.7,-9.6l10.7,-8.0l10.7,-6.3l10.6,-4.5l10.7,-2.7l10.7,-0.8l8.9,0.7l10.7,2.5l10.7,4.3l10.6,6.1l10.7,7.8l10.7,9.5l10.7,10.9l10.7,12.4l8.9,11.3l10.6,14.7l10.7,15.6l12.5,19.5l23.1,38.4l48.1,83.9l21.3,36.2l23.2,37.1l21.3,31.2l12.5,16.7l12.5,15.4l12.4,14.2l10.7,11.1l12.5,11.7l12.4,10.4l12.5,9.2l12.4,7.9l14.3,7.6l16.0,7.0l16.0,5.4l17.8,4.6l14.3,2.9l14.2,2.2l69.4,8.4l37.4,6.0l37.4,7.7l80.1,18.9l40.9,8.1l37.4,5.4l40.9,3.9l44.5,2.3l55.2,1.3"/>
<path d="M131.6,1324.3l90.8,-0.7l62.3,-1.7l26.7,-1.5l23.1,-1.8l21.4,-2.3l19.6,-2.8l19.5,-3.6l19.6,-4.6l17.8,-5.1l16.0,-5.6l16.1,-6.6l14.2,-6.9l16.0,-8.8l14.3,-9.0l14.2,-10.2l12.5,-9.9l14.2,-12.5l12.5,-11.9l12.4,-13.0l14.3,-16.1l12.4,-15.2l14.3,-18.5l23.1,-32.5l24.9,-38.1l23.2,-37.3l49.8,-82.6l24.9,-39.4l12.5,-18.6l10.7,-15.1l10.6,-14.1l10.7,-13.2l12.5,-13.9l10.7,-10.6l12.4,-10.5l10.7,-7.5l12.5,-6.9l10.6,-4.1l10.7,-2.5l10.7,-0.8l10.7,0.9l10.7,2.5l10.6,4.1l10.7,5.7l10.7,7.3l12.5,10.3l10.6,10.4l12.5,13.7l10.7,13.0l10.7,14.0l10.6,14.9l12.5,18.4l24.9,39.2l48.1,79.1l21.3,34.3l23.2,35.1l19.6,27.4l12.4,16.2l12.5,15.1l12.4,13.9l10.7,10.9l10.7,10.0l12.5,10.5l10.6,8.1l12.5,8.2l14.2,8.0l16.1,7.3l16.0,5.7l16.0,4.3l12.5,2.7l14.2,2.3l67.6,8.2l17.8,2.7l17.8,3.2l35.6,8.1l74.8,19.5l32.0,7.0l30.3,5.1l32.0,3.8l33.9,2.5l39.1,1.5"/>
<path d="M131.6,1324.4l149.5,-0.1l67.7,-0.5l49.8,-1.5l19.6,-1.2l17.8,-1.6l17.8,-2.2l17.8,-3.0l16.0,-3.7l14.2,-4.2l14.3,-5.2l14.2,-6.4l12.5,-6.8l12.4,-8.0l12.5,-9.3l12.5,-10.7l12.4,-12.3l10.7,-11.9l10.7,-13.1l10.7,-14.4l10.6,-15.7l12.5,-19.9l19.6,-34.6l21.3,-41.8l19.6,-41.2l42.7,-92.8l19.6,-40.3l17.8,-33.4l8.9,-15.1l8.9,-13.9l8.9,-12.5l8.9,-10.9l8.9,-9.4l8.9,-7.6l8.9,-5.9l8.9,-4.1l7.1,-2.0l8.9,-0.9l7.2,0.6l7.1,1.6l7.1,2.8l7.1,3.7l7.1,4.7l7.2,5.5l7.1,6.4l8.9,9.1l12.4,14.3l14.3,18.2l14.2,19.5l48.1,67.9l16.0,21.3l14.2,17.9l17.8,20.7l16.1,17.2l17.8,17.3l16.0,13.8l17.8,13.4l16.0,9.9l8.9,4.5l7.1,3.0l8.9,3.1l7.1,1.9l14.3,2.4l14.2,0.5l14.3,-1.0l32.0,-3.5l8.9,-0.4l8.9,0.4l8.9,1.3l8.9,2.5l8.9,3.6l8.9,5.1l8.9,6.4l8.9,7.8l8.9,9.0l10.7,12.4l17.8,23.3l40.9,57.6l12.5,16.1l10.7,12.7l10.6,11.3l10.7,10.0l10.7,8.6l12.5,8.4l7.1,4.0l8.9,4.4l8.9,3.5l8.9,3.0l8.9,2.4l10.7,2.2l21.3,2.9l23.2,1.7l30.2,0.8l124.6,0.4"/>
<path d="M131.6,1324.4l103.2,-0.0l33.9,-0.4l24.9,-1.4l10.7,-1.3l8.9,-1.6l8.9,-2.3l7.1,-2.4l7.1,-3.0l7.1,-3.5l7.1,-4.1l8.9,-5.9l28.5,-21.6l10.7,-7.2l7.1,-3.9l5.4,-2.3l7.1,-2.1l5.3,-0.7l5.4,-0.1l5.3,0.6l5.3,1.2l7.2,2.5l10.6,5.1l25.0,13.6l12.4,5.1l7.1,1.9l7.2,1.1l7.1,0.1l5.3,-0.6l5.4,-1.1l7.1,-2.2l5.3,-2.2l7.1,-3.8l5.4,-3.4l7.1,-5.2l7.1,-6.1l7.1,-6.8l12.5,-14.0l10.7,-13.9l10.7,-15.9l10.6,-17.9l10.7,-19.9l10.7,-22.0l10.7,-24.2l10.7,-26.2l8.9,-23.4l10.6,-29.8l19.6,-59.0l17.8,-57.5l39.2,-130.6l19.6,-61.9l16.0,-46.1l8.9,-23.1l7.1,-17.0l8.9,-19.1l7.1,-13.4l7.1,-11.7l7.2,-9.8l5.3,-6.1l3.6,-3.5l7.1,-5.3l7.1,-3.3l3.6,-0.9l3.5,-0.4l3.6,0.2l3.5,0.7l7.2,3.0l7.1,5.0l7.1,7.1l7.1,9.0l7.1,11.0l7.2,12.7l8.9,18.3l7.1,16.3l8.9,22.5l8.9,24.4l8.9,26.0l19.6,61.7l40.9,136.4l19.6,62.9l10.7,32.5l10.6,30.9l10.7,29.1l8.9,22.7l12.5,29.5l10.7,23.0l12.4,24.1l12.5,21.3l12.4,18.7l12.5,16.1l12.5,13.8l12.4,11.7l12.5,9.8l12.4,8.1l14.3,7.5l14.2,6.0l16.0,5.1l16.1,3.7l17.8,3.0l21.3,2.5l17.8,1.3l21.4,1.0l55.2,1.0l332.8,0.3"/>
<path d="M131.6,1324.4l165.5,-0.1l69.5,-0.6l49.8,-1.7l19.6,-1.5l17.8,-1.9l19.6,-3.0l17.8,-3.9l16.0,-4.8l14.2,-5.4l14.3,-6.9l12.4,-7.3l12.5,-8.7l12.4,-10.3l12.5,-12.2l12.5,-14.0l12.4,-16.2l10.7,-15.7l10.7,-17.3l10.7,-19.1l10.6,-20.9l12.5,-26.5l8.9,-20.4l10.7,-25.9l19.6,-51.2l19.5,-54.8l42.8,-124.0l17.8,-49.1l17.8,-44.7l8.9,-20.2l7.1,-14.9l8.9,-16.8l7.1,-11.9l8.9,-12.9l7.1,-8.5l8.9,-8.5l7.1,-4.8l5.4,-2.5l3.5,-1.1l7.2,-1.0l7.1,0.8l7.1,2.6l7.1,4.3l8.9,7.8l7.1,8.0l8.9,12.3l7.2,11.4l8.9,16.3l7.1,14.5l8.9,19.8l8.9,21.3l8.9,22.7l19.6,53.6l42.7,123.8l19.6,54.8l21.3,55.5l10.7,25.5l8.9,20.1l12.5,26.0l10.6,20.3l10.7,18.5l12.5,19.2l10.7,14.5l12.4,14.8l10.7,10.9l12.5,10.7l8.9,6.4l10.6,6.4l8.9,4.4l10.7,4.1l10.7,3.1l10.7,2.0l10.7,1.2l12.4,0.3l8.9,-0.4l10.7,-1.0l10.7,-1.5l12.4,-2.3l21.4,-5.1l55.2,-14.5l16.0,-3.5l14.2,-2.5l16.1,-2.0l16.0,-1.0l16.0,0.0l16.0,1.2l12.5,1.5l12.4,2.2l26.7,6.3l25.0,7.3l60.5,19.3l35.6,9.8l17.8,4.0l16.0,3.2l33.8,5.1"/>
<path d="M131.6,1324.4l181.6,-0.1l67.6,-0.4l49.8,-1.6l19.6,-1.4l17.8,-1.8l19.6,-3.1l16.0,-3.6l16.0,-4.9l14.3,-5.6l14.2,-7.3l12.5,-7.8l12.4,-9.6l10.7,-9.6l12.5,-13.2l10.7,-13.1l12.4,-17.7l10.7,-17.2l12.5,-22.7l10.6,-21.8l10.7,-23.9l10.7,-26.0l8.9,-23.3l10.7,-29.7l19.6,-59.0l17.8,-57.6l40.9,-137.3l19.6,-62.1l16.0,-45.9l8.9,-23.0l7.1,-16.8l8.9,-18.8l7.1,-13.1l7.2,-11.3l7.1,-9.4l7.1,-7.4l7.1,-5.4l7.1,-3.3l3.6,-0.8l3.6,-0.3l3.5,0.2l3.6,0.8l7.1,3.1l7.1,5.2l7.1,7.3l7.2,9.3l7.1,11.1l7.1,13.1l8.9,18.6l7.1,16.7l8.9,22.8l16.0,45.8l19.6,62.0l41.0,137.3l19.5,63.3l10.7,32.6l10.7,31.0l10.7,29.2l8.9,22.8l12.4,29.4l10.7,22.9l10.7,20.8l12.5,21.6l12.4,18.9l12.5,16.3l12.4,13.9l12.5,11.7l10.7,8.4l10.7,7.1l10.6,5.9l12.5,5.3l12.5,3.8l10.6,2.1l12.5,1.1l10.7,-0.4l8.9,-1.2l8.9,-2.0l8.9,-2.9l10.7,-4.5l16.0,-8.6l35.6,-22.0l8.9,-4.8l7.1,-3.2l8.9,-3.0l7.1,-1.5l7.1,-0.6l7.2,0.2l7.1,1.1l7.1,2.0l7.1,2.7l7.1,3.4l14.3,8.4l35.6,23.5l10.7,6.2l8.9,4.5l16.0,6.7l8.9,2.8l8.9,2.2l10.7,2.1l12.4,1.7l12.5,1.1l16.0,0.8l39.2,0.7l92.5,0.1"/>
<path d="M131.6,1324.4l188.7,-0.1l67.6,-0.4l48.1,-1.4l19.6,-1.4l16.0,-1.7l19.6,-3.1l16.0,-3.7l14.2,-4.5l14.3,-5.9l12.4,-6.5l12.5,-8.2l12.4,-10.0l10.7,-10.3l12.5,-14.2l10.7,-14.2l10.6,-16.4l10.7,-18.6l10.7,-21.0l10.7,-23.4l10.7,-25.9l10.6,-28.4l8.9,-25.5l8.9,-27.1l19.6,-64.5l17.8,-63.3l39.2,-144.2l17.8,-61.8l16.0,-50.3l7.1,-20.1l7.1,-18.4l7.2,-16.7l7.1,-14.7l7.1,-12.6l7.1,-10.4l7.1,-8.1l7.2,-5.7l3.5,-2.0l3.6,-1.3l5.3,-0.8l3.6,0.2l3.5,0.8l3.6,1.4l3.6,2.1l7.1,5.9l7.1,8.4l7.1,10.6l7.1,12.8l7.2,14.8l7.1,16.9l7.1,18.6l7.1,20.2l16.0,50.5l17.8,62.0l39.2,144.2l17.8,63.2l19.6,64.3l8.9,27.0l8.9,25.3l10.7,28.2l10.6,25.8l10.7,23.2l10.7,20.6l10.7,18.3l10.7,15.7l7.1,9.2l5.3,6.1l10.7,10.6l7.1,5.6l7.1,4.5l7.2,3.4l5.3,1.8l7.1,1.3l5.4,0.2l5.3,-0.5l7.1,-1.7l5.4,-2.1l5.3,-2.6l10.7,-7.1l10.7,-8.7l24.9,-22.8l7.1,-5.7l5.3,-3.7l7.2,-3.9l7.1,-2.6l7.1,-1.1l5.3,0.3l5.4,1.1l7.1,2.9l7.1,4.4l7.1,5.7l12.5,12.2l23.1,26.0l10.7,11.4l10.7,10.1l8.9,7.2l8.9,6.1l10.7,5.7l8.9,3.6l10.7,3.2l10.6,2.2l12.5,1.6l14.2,1.0l17.8,0.6l242.1,0.3"/>
</g>
<path fill="none" stroke="#72b84f" stroke-width="4.5" d="M325.4,1324.2C335.3,1323.1 364.2,1324.6 384.6,1317.8C405.0,1311.0 430.4,1299.1 448.0,1283.5C465.6,1267.9 476.9,1246.8 490.3,1224.3C503.7,1201.8 516.3,1175.7 528.3,1148.2C540.3,1120.7 550.9,1091.8 562.2,1059.4C573.5,1027.0 586.1,984.0 596.0,953.7C605.9,923.4 614.4,897.3 621.4,877.6C628.4,857.9 632.0,850.1 638.3,835.3C644.6,820.5 652.4,801.5 659.4,788.8C666.4,776.1 673.5,765.9 680.5,759.2C687.5,752.5 694.7,749.7 701.7,748.6C708.8,747.5 713.6,750.4 722.8,752.9C732.0,755.4 744.0,760.9 756.7,763.4C769.4,765.9 788.4,765.6 798.9,767.7C809.4,769.8 812.2,769.8 820.0,776.1C827.8,782.4 833.5,786.0 845.5,805.7C857.5,825.4 877.2,862.8 892.0,894.5C906.8,926.2 920.1,965.0 934.2,996.0C948.3,1027.0 963.8,1056.5 976.5,1080.5C989.2,1104.5 997.9,1124.0 1010.4,1139.7C1022.9,1155.4 1035.7,1164.6 1051.4,1174.6C1067.2,1184.6 1084.1,1195.1 1104.9,1199.6C1125.7,1204.1 1158.4,1199.6 1176.2,1201.4C1194.0,1203.2 1197.0,1203.5 1211.9,1210.3C1226.8,1217.1 1244.6,1231.7 1265.4,1242.4C1286.2,1253.1 1313.0,1263.8 1336.8,1274.5C1360.6,1285.2 1387.3,1298.6 1408.1,1306.6C1428.9,1314.6 1442.3,1319.6 1461.6,1322.6C1480.9,1325.6 1513.6,1324.1 1524.0,1324.4"/>
<path fill="none" stroke="#de5e4e" stroke-width="4.5" d="M414.2,1324.4C423.7,1323.5 451.6,1322.4 471.2,1319.1C490.8,1315.8 512.9,1311.6 531.9,1304.8C550.9,1298.0 567.6,1290.8 585.4,1278.0C603.2,1265.2 623.4,1245.9 638.9,1228.1C654.4,1210.3 666.3,1191.8 678.2,1171.0C690.1,1150.2 699.0,1130.5 710.3,1103.2C721.6,1075.9 732.9,1042.6 746.0,1006.9C759.1,971.2 771.9,934.3 788.8,889.2C805.7,844.1 832.0,773.8 847.2,736.2C862.4,698.6 869.2,679.0 880.2,663.6C891.2,648.2 903.4,644.8 913.3,643.7C923.2,642.6 931.5,647.5 939.7,657.0C948.0,666.5 955.1,683.5 962.8,700.5C970.5,717.5 977.6,737.7 985.9,759.3C994.2,780.9 1001.5,799.4 1012.4,830.0C1023.3,860.6 1037.2,909.7 1051.4,942.7C1065.6,975.8 1079.9,998.6 1097.7,1028.3C1115.5,1058.0 1140.0,1097.3 1158.4,1121.1C1176.8,1144.9 1187.5,1154.3 1208.3,1171.0C1229.1,1187.7 1258.8,1208.5 1283.2,1221.0C1307.6,1233.5 1333.8,1239.2 1354.6,1246.0C1375.4,1252.8 1392.0,1257.2 1408.1,1262.0C1424.1,1266.8 1437.8,1265.3 1450.9,1274.5C1464.0,1283.7 1475.3,1309.0 1486.6,1317.3C1497.9,1325.6 1513.3,1323.2 1518.7,1324.4"/>
<path fill="none" stroke="#58a6ee" stroke-width="4.5" d="M585.4,1324.4C589.0,1322.6 599.7,1322.0 606.8,1313.7C613.9,1305.4 621.7,1285.5 628.2,1274.5C634.7,1263.5 638.9,1253.0 646.0,1247.7C653.1,1242.4 663.3,1246.9 671.0,1242.4C678.7,1238.0 684.1,1229.9 692.4,1221.0C700.7,1212.1 711.5,1201.4 721.0,1188.9C730.5,1176.4 740.6,1157.9 749.5,1146.0C758.4,1134.1 766.8,1128.8 774.5,1117.5C782.2,1106.2 789.4,1097.9 795.9,1078.3C802.4,1058.7 809.0,1025.4 813.7,999.8C818.5,974.2 819.9,953.2 824.4,924.9C828.9,896.6 833.5,879.6 840.6,830.0C847.7,780.4 858.7,687.4 867.0,627.2C875.3,567.0 883.6,510.5 890.2,468.7C896.8,426.9 901.2,395.5 906.7,376.2C912.2,356.9 916.6,353.1 923.2,353.1C929.8,353.1 937.5,356.4 946.3,376.2C955.1,396.0 968.3,441.2 976.0,472.0C983.7,502.8 987.5,538.1 992.5,561.2C997.5,584.3 1000.7,591.4 1005.7,610.7C1010.7,630.0 1015.1,640.2 1022.3,676.8C1029.5,713.3 1039.7,785.7 1048.7,830.0C1057.7,874.3 1066.9,909.7 1076.3,942.7C1085.7,975.8 1096.0,1009.3 1104.9,1028.3C1113.8,1047.3 1119.1,1039.7 1129.8,1056.9C1140.5,1074.2 1155.4,1112.2 1169.1,1131.8C1182.8,1151.4 1198.8,1159.7 1211.9,1174.6C1225.0,1189.5 1238.7,1208.5 1247.6,1221.0C1256.5,1233.5 1258.3,1242.4 1265.4,1249.5C1272.5,1256.6 1281.5,1253.1 1290.4,1263.8C1299.3,1274.5 1309.4,1303.6 1318.9,1313.7C1328.4,1323.8 1342.7,1322.6 1347.5,1324.4"/>
<g font-family="Liberation Sans, sans-serif" font-size="24.5" fill="#444"><text x="129" y="1333.2" text-anchor="end">0</text><text x="129" y="1149.8" text-anchor="end">0.01</text><text x="129" y="966.4" text-anchor="end">0.02</text><text x="129" y="783.1" text-anchor="end">0.03</text><text x="129" y="599.7" text-anchor="end">0.04</text><text x="129" y="416.3" text-anchor="end">0.05</text><text x="129" y="232.9" text-anchor="end">0.06</text><text x="173.3" y="1516" text-anchor="middle">−60</text><text x="451.6" y="1516" text-anchor="middle">−40</text><text x="729.9" y="1516" text-anchor="middle">−20</text><text x="1008.2" y="1516" text-anchor="middle">0</text><text x="1286.5" y="1516" text-anchor="middle">20</text><text x="1564.8" y="1516" text-anchor="middle">40</text></g>
<text transform="translate(60,838) rotate(-90)" text-anchor="middle" font-family="Liberation Sans, sans-serif" font-size="26.8" fill="#444">Density</text>
<g stroke="#dbdcde" stroke-width="3.5"><line x1="1772" y1="1128.6" x2="1832" y2="1128.6"/><line x1="1772" y1="1166.6" x2="1832" y2="1166.6"/><line x1="1772" y1="1204.7" x2="1832" y2="1204.7"/><line x1="1772" y1="1242.8" x2="1832" y2="1242.8"/><line x1="1772" y1="1280.8" x2="1832" y2="1280.8"/><line x1="1772" y1="1318.8" x2="1832" y2="1318.8"/><line x1="1772" y1="1356.9" x2="1832" y2="1356.9"/><line x1="1772" y1="1394.9" x2="1832" y2="1394.9"/><line x1="1772" y1="1433.0" x2="1832" y2="1433.0"/><line x1="1772" y1="1471.0" x2="1832" y2="1471.0"/></g>
<g font-family="Liberation Sans, sans-serif" font-size="23" fill="#444"><text x="1843" y="1137.1">MO</text><text x="1843" y="1175.1">MS</text><text x="1843" y="1213.2">MT</text><text x="1843" y="1251.2">NC</text><text x="1843" y="1289.3">ND</text><text x="1843" y="1327.3">NE</text><text x="1843" y="1365.4">NH</text><text x="1843" y="1403.4">NJ</text><text x="1843" y="1441.5">NM</text><text x="1843" y="1479.5">NV</text></g>
</svg>

<!-- toolbar icons -->
<svg class="abs" style="left:1572px;top:106px" width="30" height="26" viewBox="0 0 30 26"><ellipse cx="14.2" cy="12.3" rx="11.9" ry="9.75" fill="#43a872"/><path d="M5.5 17 L2.3 23.4 L12.5 20.8 Z" fill="#43a872"/></svg>
<svg class="abs" style="left:1640px;top:105px" width="24" height="28" viewBox="0 0 24 28"><path d="M12 2.6V21M4 10.6L12 2.6L20 10.6M2.3 23.8H21.7" stroke="#333" stroke-width="1.8" fill="none"/></svg>
<svg class="abs" style="left:1700px;top:105px" width="24" height="28" viewBox="0 0 24 28"><path d="M11.4 1.7V20.6M3.4 12.8L11.4 20.8L19.4 12.8M2 23.8H21" stroke="#333" stroke-width="1.8" fill="none"/></svg>
<svg class="abs" style="left:1753px;top:105px" width="30" height="28" viewBox="0 0 30 28"><rect x="3.4" y="3.2" width="23.7" height="20.3" rx="2.5" stroke="#333" stroke-width="1.8" fill="none"/><path d="M15.5 3.2V23.5M3.4 13.3H27.1" stroke="#333" stroke-width="1.8" fill="none"/></svg>
<svg class="abs" style="left:1806px;top:105px" width="28" height="28" viewBox="0 0 28 28"><path d="M16 11.6L25 2.6M18.9 2.3H25.5V9.3M13.7 14.5L3.5 24.1M3.2 16.3V24.4H10.7" stroke="#333" stroke-width="1.8" fill="none"/></svg>

<!-- right panel -->
<div id="rpanel"></div>
<svg class="abs" style="left:1992px;top:23px" width="15" height="10" viewBox="0 0 15 10"><path d="M0.5 0.5H14.5L7.5 9Z" fill="#555"/></svg>
<div class="t" style="left:2018px;top:17px;font-size:24.8px;font-weight:bold;color:#555;">1. Local Data - CSV</div>
<div class="abs" style="left:1992px;top:64px;width:432px;height:52px;background:#f1f1f1;border-radius:7px;"></div>
<div class="t" style="left:2010px;top:77px;font-size:24.2px;color:#666;"><b>path</b> = airline-delay-2016-09.csv</div>

<div id="green"></div>
<svg class="abs" style="left:1992px;top:1155px" width="15" height="10" viewBox="0 0 15 10"><path d="M0.5 0.5H14.5L7.5 9Z" fill="#fff"/></svg>
<div class="t" style="left:2017px;top:1148px;font-size:25px;font-weight:bold;color:#fff;">8. Mutate (Create Calculation)...</div>
<svg class="abs" style="left:2400px;top:1149px" width="24" height="20" viewBox="0 0 24 20"><path d="M1 2.5H23M1 10H23M1 17.2H23" stroke="#fff" stroke-width="1.6" fill="none"/></svg>
<div class="pill" style="top:1200.3px"></div>
<div class="pilltxt" style="top:1213.1px"><b>Is_CA_NY</b> = <b>origin_state_des…</b></div>
<div class="pill" style="top:1260.4px"></div>
<div class="pilltxt" style="top:1273.2px"><b>is_Hawaii</b> = str_detect(<b>origin_…</b></div>
<div class="pill" style="top:1320.5px"></div>
<div class="pilltxt" style="top:1333.3px"><b>ARR_DELAY_category</b> = dete…</div>
<div class="pill" style="top:1380.6px"></div>
<div class="pilltxt" style="top:1393.4px"><b>is_super_delayed</b> = <b>ARR_DEL…</b></div>
<div class="pill" style="top:1440.7px"></div>
<div class="pilltxt" style="top:1453.5px"><b>DEP_DELAY_category</b> = dete…</div>
<div class="pill" style="top:1500.8px"></div>
<div class="pilltxt" style="top:1513.6px"><b>ARR_DELAY_10_buckets</b> = c…</div>

<!-- pin and connector -->
<svg class="abs" style="left:1850px;top:85px" width="120" height="1070" viewBox="0 0 120 1070"><path d="M60 35 H102 V58" stroke="#43a872" stroke-width="4" fill="none"/></svg>
<div class="abs" style="left:1856px;top:90px;width:60px;height:60px;border-radius:50%;background:#43a872;"></div>
<svg class="abs" style="left:1871px;top:105px" width="30" height="30" viewBox="0 0 30 30"><path d="M6.9 2H23V7H19.8V12.9Q24 15 25 18V19.8H16.6V26.5L14.8 28L13 26.5V19.8H5.1V18Q6 15 9.7 12.9V7H6.9Z" fill="#fff"/></svg>

<!-- popover -->
<div id="pop"></div>
<div class="t" style="left:1635px;top:174.5px;font-size:35.4px;font-weight:bold;color:#4a4a4a;">Chart Name / Comment</div>
<div class="t" style="left:2337px;top:176.5px;font-size:27.8px;color:#3ea36b;">Help</div>
<div class="lbl" style="left:1636px;top:269px;">Chart Name</div>
<div id="inp"></div>
<div class="t" style="left:1663px;top:346px;font-size:28.3px;color:#555;">Distribution of Arrival Delay Time by Origin State</div>
<div class="lbl" style="left:1636px;top:450px;">Comment</div>
<div id="ta"></div>
<div class="tatxt" style="top:528.0px;letter-spacing:0.00px">Looks the flights departing in **California** tend to be</div>
<div class="tatxt" style="top:567.8px;letter-spacing:0.00px">delayed more than the flights departing in other states.</div>
<div class="tatxt" style="top:647.2px;letter-spacing:-0.21px">* Flights departing in Virgin Island (Green) tend to arrive</div>
<div class="tatxt" style="top:687.0px;letter-spacing:0.00px">earlier than the expected time.</div>
<div class="tatxt" style="top:726.8px;letter-spacing:-0.13px">* Flights departing in Hawaii (Blue) tend to arrive later</div>
<div class="tatxt" style="top:766.5px;letter-spacing:0.09px">compared to others.</div>
<svg class="abs" style="left:2376px;top:918.5px" width="14" height="14" viewBox="0 0 14 14"><path d="M1 13L13 1M7 13L13 7" stroke="#555" stroke-width="1.3" fill="none"/></svg>
<div class="t" style="left:1636.5px;top:974.5px;font-size:24.2px;color:#6a6a6a;">Keyboard shortcuts:</div>
<div id="kbd"></div>
<div class="t" style="left:1920px;top:978px;font-size:22px;color:#666;">Command + Enter</div>
<div id="btnok"></div>
<div class="t" style="left:2179.5px;top:1057.9px;font-size:29px;color:#fff;">OK</div>
<div id="btncancel"></div>
<div class="t" style="left:2281.5px;top:1058.5px;font-size:28.2px;color:#333;">Cancel</div>
<!-- connector below popover -->
<svg class="abs" style="left:1948px;top:1136px" width="22" height="20" viewBox="0 0 22 20"><path d="M4 0V14H20" stroke="#2f8a58" stroke-width="4" fill="none"/></svg>
</body>
</html>
